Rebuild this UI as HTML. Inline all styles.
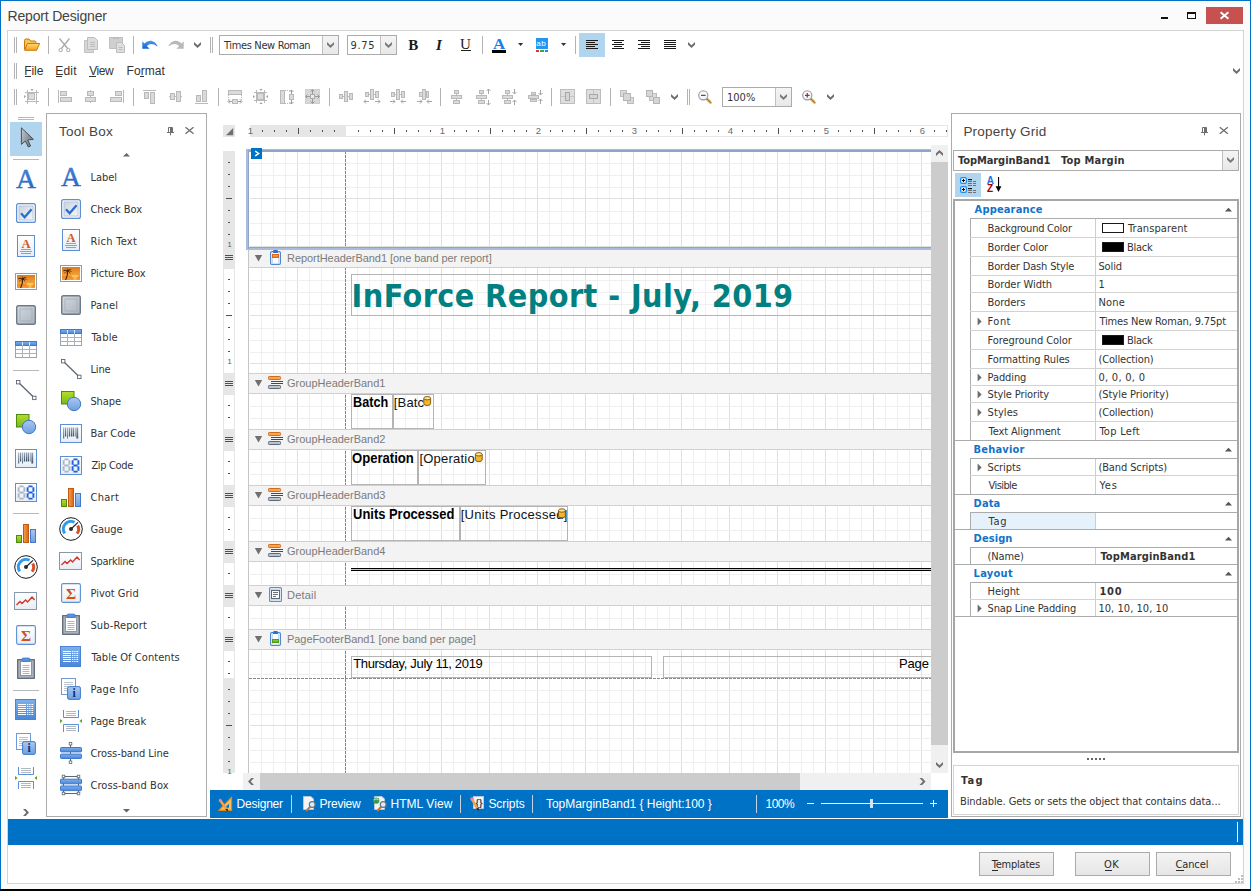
<!DOCTYPE html>
<html lang="en"><head><meta charset="utf-8"><title>Report Designer</title>
<style>
html,body{margin:0;padding:0}
body{width:1251px;height:891px;position:relative;overflow:hidden;background:#000;font-family:"Liberation Sans",sans-serif;font-size:12px}
#app div{position:absolute}
#app section{position:absolute;left:0;top:0;width:0;height:0}
.t{position:absolute;white-space:pre;display:block}
#ov{position:absolute;left:0;top:0;pointer-events:none}
u{text-decoration:underline;text-underline-offset:1px}
</style></head>
<body>
<div id="app">
<section class="window-frame" aria-label="Window frame, status bar and dialog buttons">
<div style="left:0px;top:0px;width:1251px;height:889px;background:#fbfbfb;border:1px solid #0072c6;border-bottom:none;box-sizing:border-box;"></div>
<div style="left:1px;top:1px;width:1249px;height:888px;border-left:1px solid #fff;border-top:1px solid #fff;border-right:1px solid #fff;box-sizing:border-box;"></div>
<div style="left:7px;top:30px;width:1237px;height:854px;background:#fff;border:1px solid #d4d4d4;box-sizing:border-box;"></div>
<span id="t0" class="t" style="left:7.5px;top:7px;font-size:14px;line-height:18px;color:#444;font-family:'Liberation Sans',sans-serif;letter-spacing:-0.179px;">Report Designer</span>
<div style="left:1206px;top:7px;width:37px;height:17px;background:#c75050;"></div>
<div style="left:8px;top:819px;width:1235px;height:26px;background:#0072c6;"></div>
<div style="left:1237px;top:822px;width:1px;height:20px;background:#fff;"></div>
<div style="left:979px;top:852px;width:75px;height:24px;background:linear-gradient(#f3f3f3,#e6e6e6);border:1px solid #ababab;box-sizing:border-box;"></div>
<span id="t1" class="t" style="left:991.7px;top:858px;font-size:11px;line-height:14px;color:#2b2b2b;font-family:'DejaVu Sans Condensed','Liberation Sans',sans-serif;letter-spacing:-0.213px;">Templates</span>
<div style="left:991.7px;top:870px;width:6.3px;height:1px;background:#2b2b2b;"></div>
<div style="left:1075px;top:852px;width:75px;height:24px;background:linear-gradient(#f3f3f3,#e6e6e6);border:1px solid #ababab;box-sizing:border-box;"></div>
<span id="t2" class="t" style="left:1104.0px;top:858px;font-size:11px;line-height:14px;color:#2b2b2b;font-family:'DejaVu Sans Condensed','Liberation Sans',sans-serif;letter-spacing:0.400px;">OK</span>
<div style="left:1105px;top:870px;width:7.1px;height:1px;background:#2b2b2b;"></div>
<div style="left:1156px;top:852px;width:75px;height:24px;background:linear-gradient(#f3f3f3,#e6e6e6);border:1px solid #ababab;box-sizing:border-box;"></div>
<span id="t3" class="t" style="left:1175.4px;top:858px;font-size:11px;line-height:14px;color:#2b2b2b;font-family:'DejaVu Sans Condensed','Liberation Sans',sans-serif;letter-spacing:-0.100px;">Cancel</span>
<div style="left:1176.4px;top:870px;width:7.3px;height:1px;background:#2b2b2b;"></div>
</section>
<section class="toolbars" aria-label="Toolbars and main menu">
<div style="left:14px;top:37px;width:1px;height:16px;background:#b4b4b4;"></div>
<div style="left:16px;top:37px;width:1px;height:16px;background:#b4b4b4;"></div>
<div style="left:48px;top:36px;width:1px;height:18px;background:#b4b4b4;"></div>
<div style="left:133px;top:36px;width:1px;height:18px;background:#b4b4b4;"></div>
<div style="left:210px;top:37px;width:1px;height:16px;background:#b4b4b4;"></div>
<div style="left:212px;top:37px;width:1px;height:16px;background:#b4b4b4;"></div>
<div style="left:219px;top:35px;width:120px;height:20px;background:#fff;border:1px solid #ababab;box-sizing:border-box;"></div>
<div style="left:322px;top:36px;width:16px;height:18px;background:linear-gradient(#f4f4f4,#e8e8e8);border-left:1px solid #c0c0c0;box-sizing:border-box;"></div>
<span id="t4" class="t" style="left:224.0px;top:39px;font-size:11px;line-height:14px;color:#333;font-family:'DejaVu Sans Condensed','Liberation Sans',sans-serif;letter-spacing:-0.357px;">Times New Roman</span>
<div style="left:347px;top:35px;width:50px;height:20px;background:#fff;border:1px solid #ababab;box-sizing:border-box;"></div>
<div style="left:380px;top:36px;width:16px;height:18px;background:linear-gradient(#f4f4f4,#e8e8e8);border-left:1px solid #c0c0c0;box-sizing:border-box;"></div>
<span id="t5" class="t" style="left:350.5px;top:39px;font-size:11px;line-height:14px;color:#333;font-family:'DejaVu Sans Condensed','Liberation Sans',sans-serif;letter-spacing:0.667px;">9.75</span>
<span id="t6" class="t" style="left:408.2px;top:35px;font-size:15px;line-height:20px;color:#1a1a1a;font-family:'Liberation Serif',serif;font-weight:bold;">B</span>
<span id="t7" class="t" style="left:436.0px;top:35px;font-size:15px;line-height:20px;color:#1a1a1a;font-family:'Liberation Serif',serif;font-weight:bold;font-style:italic;">I</span>
<span id="t8" class="t" style="left:460.1px;top:34px;font-size:15px;line-height:20px;color:#1a1a1a;font-family:'Liberation Serif',serif;">U</span>
<div style="left:461px;top:50px;width:10px;height:1px;background:#222;"></div>
<div style="left:482px;top:36px;width:1px;height:18px;background:#b4b4b4;"></div>
<div style="left:492px;top:50px;width:14px;height:3px;background:#000;"></div>
<div style="left:536px;top:38px;width:12px;height:11px;background:#2196f3;"></div>
<span id="t9" class="t" style="left:536.2px;top:39px;font-size:8px;line-height:10px;color:#fff;font-family:'Liberation Sans',sans-serif;letter-spacing:0.600px;">ab</span>
<div style="left:536px;top:50px;width:3px;height:2px;background:#e53030;"></div>
<div style="left:540px;top:50px;width:4px;height:2px;background:#43a832;"></div>
<div style="left:545px;top:50px;width:3px;height:2px;background:#1e8af0;"></div>
<div style="left:575px;top:36px;width:1px;height:18px;background:#b4b4b4;"></div>
<div style="left:579px;top:33px;width:26px;height:24px;background:#b2d5ef;"></div>
<div style="left:14px;top:63px;width:1px;height:16px;background:#b4b4b4;"></div>
<div style="left:16px;top:63px;width:1px;height:16px;background:#b4b4b4;"></div>
<span id="t10" class="t" style="left:24.2px;top:63px;font-size:12px;line-height:16px;color:#333;font-family:'Liberation Sans',sans-serif;letter-spacing:-0.067px;">File</span>
<div style="left:25.2px;top:76px;width:5.5px;height:1px;background:#333;"></div>
<span id="t11" class="t" style="left:55.2px;top:63px;font-size:12px;line-height:16px;color:#333;font-family:'Liberation Sans',sans-serif;letter-spacing:0.200px;">Edit</span>
<div style="left:56.2px;top:76px;width:5.4px;height:1px;background:#333;"></div>
<span id="t12" class="t" style="left:89.2px;top:63px;font-size:12px;line-height:16px;color:#333;font-family:'Liberation Sans',sans-serif;letter-spacing:-0.400px;">View</span>
<div style="left:89.2px;top:76px;width:6.7px;height:1px;background:#333;"></div>
<span id="t13" class="t" style="left:126.5px;top:63px;font-size:12px;line-height:16px;color:#333;font-family:'Liberation Sans',sans-serif;letter-spacing:0.080px;">Format</span>
<div style="left:140.2px;top:76px;width:3.6px;height:1px;background:#333;"></div>
<div style="left:14px;top:89px;width:1px;height:16px;background:#b4b4b4;"></div>
<div style="left:16px;top:89px;width:1px;height:16px;background:#b4b4b4;"></div>
<div style="left:48px;top:88px;width:1px;height:18px;background:#b4b4b4;"></div>
<div style="left:133px;top:88px;width:1px;height:18px;background:#b4b4b4;"></div>
<div style="left:218px;top:88px;width:1px;height:18px;background:#b4b4b4;"></div>
<div style="left:329px;top:88px;width:1px;height:18px;background:#b4b4b4;"></div>
<div style="left:440px;top:88px;width:1px;height:18px;background:#b4b4b4;"></div>
<div style="left:551px;top:88px;width:1px;height:18px;background:#b4b4b4;"></div>
<div style="left:610px;top:88px;width:1px;height:18px;background:#b4b4b4;"></div>
<div style="left:687px;top:89px;width:1px;height:16px;background:#b4b4b4;"></div>
<div style="left:689px;top:89px;width:1px;height:16px;background:#b4b4b4;"></div>
<div style="left:722px;top:87px;width:70px;height:20px;background:#fff;border:1px solid #ababab;box-sizing:border-box;"></div>
<div style="left:775px;top:88px;width:16px;height:18px;background:linear-gradient(#f4f4f4,#e8e8e8);border-left:1px solid #c0c0c0;box-sizing:border-box;"></div>
<span id="t14" class="t" style="left:727.0px;top:91px;font-size:11px;line-height:14px;color:#333;font-family:'DejaVu Sans Condensed','Liberation Sans',sans-serif;letter-spacing:0.000px;">100%</span>
</section>
<section class="toolbox" aria-label="Tool Box">
<div style="left:18px;top:117px;width:16px;height:1px;background:#b9b9b9;"></div>
<div style="left:18px;top:119px;width:16px;height:1px;background:#b9b9b9;"></div>
<div style="left:10px;top:122px;width:32px;height:34px;background:#b2d5ef;"></div>
<div style="left:13px;top:159px;width:26px;height:1px;background:#b9b9b9;"></div>
<div style="left:13px;top:370px;width:26px;height:1px;background:#b9b9b9;"></div>
<div style="left:13px;top:513px;width:26px;height:1px;background:#b9b9b9;"></div>
<div style="left:13px;top:690px;width:26px;height:1px;background:#b9b9b9;"></div>
<div style="left:46px;top:113px;width:161px;height:704px;background:#fff;border:1px solid #ababab;box-sizing:border-box;"></div>
<span id="t15" class="t" style="left:59.0px;top:123px;font-size:13.5px;line-height:18px;color:#444;font-family:'Liberation Sans',sans-serif;letter-spacing:0.286px;">Tool Box</span>
<span id="t16" class="t" style="left:90.4px;top:171px;font-size:11px;line-height:14px;color:#333;font-family:'DejaVu Sans Condensed','Liberation Sans',sans-serif;letter-spacing:0.000px;">Label</span>
<span id="t17" class="t" style="left:90.4px;top:203px;font-size:11px;line-height:14px;color:#333;font-family:'DejaVu Sans Condensed','Liberation Sans',sans-serif;letter-spacing:-0.038px;">Check Box</span>
<span id="t18" class="t" style="left:90.4px;top:235px;font-size:11px;line-height:14px;color:#333;font-family:'DejaVu Sans Condensed','Liberation Sans',sans-serif;letter-spacing:0.275px;">Rich Text</span>
<span id="t19" class="t" style="left:90.4px;top:267px;font-size:11px;line-height:14px;color:#333;font-family:'DejaVu Sans Condensed','Liberation Sans',sans-serif;letter-spacing:-0.030px;">Picture Box</span>
<span id="t20" class="t" style="left:90.4px;top:299px;font-size:11px;line-height:14px;color:#333;font-family:'DejaVu Sans Condensed','Liberation Sans',sans-serif;letter-spacing:0.225px;">Panel</span>
<span id="t21" class="t" style="left:91.4px;top:331px;font-size:11px;line-height:14px;color:#333;font-family:'DejaVu Sans Condensed','Liberation Sans',sans-serif;letter-spacing:0.225px;">Table</span>
<span id="t22" class="t" style="left:90.4px;top:363px;font-size:11px;line-height:14px;color:#333;font-family:'DejaVu Sans Condensed','Liberation Sans',sans-serif;letter-spacing:-0.133px;">Line</span>
<span id="t23" class="t" style="left:90.4px;top:395px;font-size:11px;line-height:14px;color:#333;font-family:'DejaVu Sans Condensed','Liberation Sans',sans-serif;letter-spacing:-0.050px;">Shape</span>
<span id="t24" class="t" style="left:90.4px;top:427px;font-size:11px;line-height:14px;color:#333;font-family:'DejaVu Sans Condensed','Liberation Sans',sans-serif;letter-spacing:-0.029px;">Bar Code</span>
<span id="t25" class="t" style="left:91.4px;top:459px;font-size:11px;line-height:14px;color:#333;font-family:'DejaVu Sans Condensed','Liberation Sans',sans-serif;letter-spacing:-0.343px;">Zip Code</span>
<span id="t26" class="t" style="left:90.4px;top:491px;font-size:11px;line-height:14px;color:#333;font-family:'DejaVu Sans Condensed','Liberation Sans',sans-serif;letter-spacing:0.325px;">Chart</span>
<span id="t27" class="t" style="left:90.4px;top:523px;font-size:11px;line-height:14px;color:#333;font-family:'DejaVu Sans Condensed','Liberation Sans',sans-serif;letter-spacing:-0.025px;">Gauge</span>
<span id="t28" class="t" style="left:90.4px;top:555px;font-size:11px;line-height:14px;color:#333;font-family:'DejaVu Sans Condensed','Liberation Sans',sans-serif;letter-spacing:-0.288px;">Sparkline</span>
<span id="t29" class="t" style="left:90.4px;top:587px;font-size:11px;line-height:14px;color:#333;font-family:'DejaVu Sans Condensed','Liberation Sans',sans-serif;letter-spacing:0.011px;">Pivot Grid</span>
<span id="t30" class="t" style="left:90.4px;top:619px;font-size:11px;line-height:14px;color:#333;font-family:'DejaVu Sans Condensed','Liberation Sans',sans-serif;letter-spacing:0.144px;">Sub-Report</span>
<span id="t31" class="t" style="left:91.4px;top:651px;font-size:11px;line-height:14px;color:#333;font-family:'DejaVu Sans Condensed','Liberation Sans',sans-serif;letter-spacing:0.056px;">Table Of Contents</span>
<span id="t32" class="t" style="left:90.4px;top:683px;font-size:11px;line-height:14px;color:#333;font-family:'DejaVu Sans Condensed','Liberation Sans',sans-serif;letter-spacing:0.325px;">Page Info</span>
<span id="t33" class="t" style="left:90.4px;top:715px;font-size:11px;line-height:14px;color:#333;font-family:'DejaVu Sans Condensed','Liberation Sans',sans-serif;letter-spacing:0.022px;">Page Break</span>
<span id="t34" class="t" style="left:90.4px;top:747px;font-size:11px;line-height:14px;color:#333;font-family:'DejaVu Sans Condensed','Liberation Sans',sans-serif;letter-spacing:-0.071px;">Cross-band Line</span>
<span id="t35" class="t" style="left:90.4px;top:779px;font-size:11px;line-height:14px;color:#333;font-family:'DejaVu Sans Condensed','Liberation Sans',sans-serif;letter-spacing:0.085px;">Cross-band Box</span>
</section>
<section class="designer" aria-label="Report design surface">
<div style="left:223px;top:125px;width:12px;height:12px;background:#e6e6e6;"></div>
<div style="left:250px;top:125px;width:698px;height:12px;background:#fff;border:1px solid #e6e6e6;box-sizing:border-box;"></div>
<div style="left:250px;top:125px;width:96px;height:12px;background:#e6e6e6;"></div>
<div style="left:240px;top:125px;width:10px;height:12px;background:#fff;"></div>
<div style="left:223px;top:151px;width:12px;height:622px;background:#e6e6e6;"></div>
<div style="left:224px;top:269px;width:10px;height:104px;background:#fff;"></div>
<div style="left:224px;top:395px;width:10px;height:34px;background:#fff;"></div>
<div style="left:224px;top:451px;width:10px;height:34px;background:#fff;"></div>
<div style="left:224px;top:507px;width:10px;height:34px;background:#fff;"></div>
<div style="left:224px;top:563px;width:10px;height:22px;background:#fff;"></div>
<div style="left:224px;top:607px;width:10px;height:22px;background:#fff;"></div>
<div style="left:224px;top:651px;width:10px;height:27px;background:#fff;"></div>
<div style="left:248px;top:151px;width:1px;height:622px;background:#c6c6c6;"></div>
<div style="left:249px;top:151px;width:1px;height:622px;background:#fff;"></div>
<div style="left:250px;top:151px;width:681px;height:99px;background-color:#fff;background-image:linear-gradient(to right,transparent 47px,#e0e0e0 47px,#e0e0e0 48px,transparent 48px),linear-gradient(to right,transparent 11px,#efefef 11px,#efefef 12px,transparent 12px,transparent 23px,#efefef 23px,#efefef 24px,transparent 24px,transparent 35px,#efefef 35px,#efefef 36px,transparent 36px);background-size:48px 48px;"></div>
<div style="left:250px;top:152px;width:681px;height:98px;background-image:linear-gradient(to bottom,transparent 46px,#e0e0e0 46px,#e0e0e0 47px,transparent 47px),linear-gradient(to bottom,transparent 11px,#efefef 11px,#efefef 12px,transparent 12px,transparent 23px,#efefef 23px,#efefef 24px,transparent 24px,transparent 35px,#efefef 35px,#efefef 36px,transparent 36px);background-size:48px 48px;"></div>
<div style="left:250px;top:268px;width:681px;height:105px;background-color:#fff;background-image:linear-gradient(to right,transparent 47px,#e0e0e0 47px,#e0e0e0 48px,transparent 48px),linear-gradient(to right,transparent 11px,#efefef 11px,#efefef 12px,transparent 12px,transparent 23px,#efefef 23px,#efefef 24px,transparent 24px,transparent 35px,#efefef 35px,#efefef 36px,transparent 36px);background-size:48px 48px;"></div>
<div style="left:250px;top:269px;width:681px;height:104px;background-image:linear-gradient(to bottom,transparent 46px,#e0e0e0 46px,#e0e0e0 47px,transparent 47px),linear-gradient(to bottom,transparent 11px,#efefef 11px,#efefef 12px,transparent 12px,transparent 23px,#efefef 23px,#efefef 24px,transparent 24px,transparent 35px,#efefef 35px,#efefef 36px,transparent 36px);background-size:48px 48px;"></div>
<div style="left:250px;top:394px;width:681px;height:35px;background-color:#fff;background-image:linear-gradient(to right,transparent 47px,#e0e0e0 47px,#e0e0e0 48px,transparent 48px),linear-gradient(to right,transparent 11px,#efefef 11px,#efefef 12px,transparent 12px,transparent 23px,#efefef 23px,#efefef 24px,transparent 24px,transparent 35px,#efefef 35px,#efefef 36px,transparent 36px);background-size:48px 48px;"></div>
<div style="left:250px;top:395px;width:681px;height:34px;background-image:linear-gradient(to bottom,transparent 46px,#e0e0e0 46px,#e0e0e0 47px,transparent 47px),linear-gradient(to bottom,transparent 11px,#efefef 11px,#efefef 12px,transparent 12px,transparent 23px,#efefef 23px,#efefef 24px,transparent 24px,transparent 35px,#efefef 35px,#efefef 36px,transparent 36px);background-size:48px 48px;"></div>
<div style="left:250px;top:450px;width:681px;height:35px;background-color:#fff;background-image:linear-gradient(to right,transparent 47px,#e0e0e0 47px,#e0e0e0 48px,transparent 48px),linear-gradient(to right,transparent 11px,#efefef 11px,#efefef 12px,transparent 12px,transparent 23px,#efefef 23px,#efefef 24px,transparent 24px,transparent 35px,#efefef 35px,#efefef 36px,transparent 36px);background-size:48px 48px;"></div>
<div style="left:250px;top:451px;width:681px;height:34px;background-image:linear-gradient(to bottom,transparent 46px,#e0e0e0 46px,#e0e0e0 47px,transparent 47px),linear-gradient(to bottom,transparent 11px,#efefef 11px,#efefef 12px,transparent 12px,transparent 23px,#efefef 23px,#efefef 24px,transparent 24px,transparent 35px,#efefef 35px,#efefef 36px,transparent 36px);background-size:48px 48px;"></div>
<div style="left:250px;top:506px;width:681px;height:35px;background-color:#fff;background-image:linear-gradient(to right,transparent 47px,#e0e0e0 47px,#e0e0e0 48px,transparent 48px),linear-gradient(to right,transparent 11px,#efefef 11px,#efefef 12px,transparent 12px,transparent 23px,#efefef 23px,#efefef 24px,transparent 24px,transparent 35px,#efefef 35px,#efefef 36px,transparent 36px);background-size:48px 48px;"></div>
<div style="left:250px;top:507px;width:681px;height:34px;background-image:linear-gradient(to bottom,transparent 46px,#e0e0e0 46px,#e0e0e0 47px,transparent 47px),linear-gradient(to bottom,transparent 11px,#efefef 11px,#efefef 12px,transparent 12px,transparent 23px,#efefef 23px,#efefef 24px,transparent 24px,transparent 35px,#efefef 35px,#efefef 36px,transparent 36px);background-size:48px 48px;"></div>
<div style="left:250px;top:562px;width:681px;height:23px;background-color:#fff;background-image:linear-gradient(to right,transparent 47px,#e0e0e0 47px,#e0e0e0 48px,transparent 48px),linear-gradient(to right,transparent 11px,#efefef 11px,#efefef 12px,transparent 12px,transparent 23px,#efefef 23px,#efefef 24px,transparent 24px,transparent 35px,#efefef 35px,#efefef 36px,transparent 36px);background-size:48px 48px;"></div>
<div style="left:250px;top:563px;width:681px;height:22px;background-image:linear-gradient(to bottom,transparent 46px,#e0e0e0 46px,#e0e0e0 47px,transparent 47px),linear-gradient(to bottom,transparent 11px,#efefef 11px,#efefef 12px,transparent 12px,transparent 23px,#efefef 23px,#efefef 24px,transparent 24px,transparent 35px,#efefef 35px,#efefef 36px,transparent 36px);background-size:48px 48px;"></div>
<div style="left:250px;top:606px;width:681px;height:23px;background-color:#fff;background-image:linear-gradient(to right,transparent 47px,#e0e0e0 47px,#e0e0e0 48px,transparent 48px),linear-gradient(to right,transparent 11px,#efefef 11px,#efefef 12px,transparent 12px,transparent 23px,#efefef 23px,#efefef 24px,transparent 24px,transparent 35px,#efefef 35px,#efefef 36px,transparent 36px);background-size:48px 48px;"></div>
<div style="left:250px;top:607px;width:681px;height:22px;background-image:linear-gradient(to bottom,transparent 46px,#e0e0e0 46px,#e0e0e0 47px,transparent 47px),linear-gradient(to bottom,transparent 11px,#efefef 11px,#efefef 12px,transparent 12px,transparent 23px,#efefef 23px,#efefef 24px,transparent 24px,transparent 35px,#efefef 35px,#efefef 36px,transparent 36px);background-size:48px 48px;"></div>
<div style="left:250px;top:650px;width:681px;height:28px;background-color:#fff;background-image:linear-gradient(to right,transparent 47px,#e0e0e0 47px,#e0e0e0 48px,transparent 48px),linear-gradient(to right,transparent 11px,#efefef 11px,#efefef 12px,transparent 12px,transparent 23px,#efefef 23px,#efefef 24px,transparent 24px,transparent 35px,#efefef 35px,#efefef 36px,transparent 36px);background-size:48px 48px;"></div>
<div style="left:250px;top:651px;width:681px;height:27px;background-image:linear-gradient(to bottom,transparent 46px,#e0e0e0 46px,#e0e0e0 47px,transparent 47px),linear-gradient(to bottom,transparent 11px,#efefef 11px,#efefef 12px,transparent 12px,transparent 23px,#efefef 23px,#efefef 24px,transparent 24px,transparent 35px,#efefef 35px,#efefef 36px,transparent 36px);background-size:48px 48px;"></div>
<div style="left:250px;top:678px;width:681px;height:95px;background-color:#fff;background-image:linear-gradient(to right,transparent 47px,#e0e0e0 47px,#e0e0e0 48px,transparent 48px),linear-gradient(to right,transparent 11px,#efefef 11px,#efefef 12px,transparent 12px,transparent 23px,#efefef 23px,#efefef 24px,transparent 24px,transparent 35px,#efefef 35px,#efefef 36px,transparent 36px);background-size:48px 48px;"></div>
<div style="left:250px;top:679px;width:681px;height:94px;background-image:linear-gradient(to bottom,transparent 46px,#e0e0e0 46px,#e0e0e0 47px,transparent 47px),linear-gradient(to bottom,transparent 11px,#efefef 11px,#efefef 12px,transparent 12px,transparent 23px,#efefef 23px,#efefef 24px,transparent 24px,transparent 35px,#efefef 35px,#efefef 36px,transparent 36px);background-size:48px 48px;"></div>
<div style="left:345px;top:151px;width:1px;height:622px;background:repeating-linear-gradient(to bottom,#858585 0,#858585 3px,transparent 3px,transparent 4px);"></div>
<div style="left:249px;top:678px;width:682px;height:1px;background:repeating-linear-gradient(to right,#8a8a8a 0,#8a8a8a 3px,#fff 3px,#fff 4px);"></div>
<div style="left:249px;top:250px;width:682px;height:18px;background:#f3f3f3;border-bottom:1px solid #d0d0d0;box-sizing:border-box;"></div>
<span id="t36" class="t" style="left:287.0px;top:251px;font-size:11px;line-height:14px;color:#7b7b7b;font-family:'Liberation Sans',sans-serif;letter-spacing:-0.053px;">ReportHeaderBand1 [one band per report]</span>
<div style="left:249px;top:373px;width:682px;height:21px;background:#f3f3f3;border-top:1px solid #d0d0d0;border-bottom:1px solid #d0d0d0;box-sizing:border-box;"></div>
<span id="t37" class="t" style="left:287.0px;top:376px;font-size:11px;line-height:14px;color:#7b7b7b;font-family:'Liberation Sans',sans-serif;letter-spacing:0.000px;">GroupHeaderBand1</span>
<div style="left:249px;top:429px;width:682px;height:21px;background:#f3f3f3;border-top:1px solid #d0d0d0;border-bottom:1px solid #d0d0d0;box-sizing:border-box;"></div>
<span id="t38" class="t" style="left:287.0px;top:432px;font-size:11px;line-height:14px;color:#7b7b7b;font-family:'Liberation Sans',sans-serif;letter-spacing:0.000px;">GroupHeaderBand2</span>
<div style="left:249px;top:485px;width:682px;height:21px;background:#f3f3f3;border-top:1px solid #d0d0d0;border-bottom:1px solid #d0d0d0;box-sizing:border-box;"></div>
<span id="t39" class="t" style="left:287.0px;top:488px;font-size:11px;line-height:14px;color:#7b7b7b;font-family:'Liberation Sans',sans-serif;letter-spacing:0.000px;">GroupHeaderBand3</span>
<div style="left:249px;top:541px;width:682px;height:21px;background:#f3f3f3;border-top:1px solid #d0d0d0;border-bottom:1px solid #d0d0d0;box-sizing:border-box;"></div>
<span id="t40" class="t" style="left:287.0px;top:544px;font-size:11px;line-height:14px;color:#7b7b7b;font-family:'Liberation Sans',sans-serif;letter-spacing:0.000px;">GroupHeaderBand4</span>
<div style="left:249px;top:585px;width:682px;height:21px;background:#f3f3f3;border-top:1px solid #d0d0d0;border-bottom:1px solid #d0d0d0;box-sizing:border-box;"></div>
<span id="t41" class="t" style="left:287.0px;top:588px;font-size:11px;line-height:14px;color:#7b7b7b;font-family:'Liberation Sans',sans-serif;letter-spacing:0.200px;">Detail</span>
<div style="left:249px;top:629px;width:682px;height:21px;background:#f3f3f3;border-top:1px solid #d0d0d0;border-bottom:1px solid #d0d0d0;box-sizing:border-box;"></div>
<span id="t42" class="t" style="left:287.0px;top:632px;font-size:11px;line-height:14px;color:#7b7b7b;font-family:'Liberation Sans',sans-serif;letter-spacing:-0.059px;">PageFooterBand1 [one band per page]</span>
<div style="left:246px;top:149px;width:685px;height:1px;background:#a9bcd9;"></div>
<div style="left:246px;top:150px;width:685px;height:2px;background:#8fa5c7;"></div>
<div style="left:246px;top:247px;width:685px;height:1px;background:#8fa5c7;"></div>
<div style="left:246px;top:248px;width:685px;height:2px;background:#a9bcd9;"></div>
<div style="left:246px;top:149px;width:2px;height:101px;background:#a9bcd9;"></div>
<div style="left:248px;top:150px;width:1px;height:99px;background:#8fa5c7;"></div>
<div style="left:251px;top:148px;width:11px;height:11px;background:#0072c6;"></div>
<div style="left:351px;top:274px;width:580px;height:42px;border:1px solid #b4b4b4;box-sizing:border-box;border-right:none;"></div>
<span id="t43" class="t" style="left:351.6px;top:275px;font-size:32px;line-height:42px;color:#008080;font-family:'DejaVu Sans Condensed','Liberation Sans',sans-serif;font-weight:bold;letter-spacing:0.419px;">InForce Report - July, 2019</span>
<div style="left:351px;top:394px;width:42px;height:35px;border:1px solid #b4b4b4;box-sizing:border-box;"></div>
<div style="left:393px;top:394px;width:41px;height:35px;border:1px solid #b4b4b4;box-sizing:border-box;"></div>
<span id="t44" class="t" style="left:352.8px;top:393px;font-size:14px;line-height:18px;color:#000;font-family:'Liberation Sans',sans-serif;font-weight:bold;transform:scaleX(0.9027);transform-origin:1.0px 0;">Batch</span>
<span id="t45" class="t" style="left:393.8px;top:394px;font-size:13px;line-height:17px;color:#111;font-family:'Liberation Sans',sans-serif;letter-spacing:0.175px;">[Batc</span>
<div style="left:351px;top:450px;width:67px;height:35px;border:1px solid #b4b4b4;box-sizing:border-box;"></div>
<div style="left:418px;top:450px;width:68px;height:35px;border:1px solid #b4b4b4;box-sizing:border-box;"></div>
<span id="t46" class="t" style="left:352.4px;top:449px;font-size:14px;line-height:18px;color:#000;font-family:'Liberation Sans',sans-serif;font-weight:bold;transform:scaleX(0.9344);transform-origin:1.0px 0;">Operation</span>
<span id="t47" class="t" style="left:419.4px;top:450px;font-size:13px;line-height:17px;color:#111;font-family:'Liberation Sans',sans-serif;letter-spacing:0.225px;">[Operatio</span>
<div style="left:351px;top:506px;width:109px;height:35px;border:1px solid #b4b4b4;box-sizing:border-box;"></div>
<div style="left:460px;top:506px;width:108px;height:35px;border:1px solid #b4b4b4;box-sizing:border-box;"></div>
<span id="t48" class="t" style="left:352.7px;top:505px;font-size:14px;line-height:18px;color:#000;font-family:'Liberation Sans',sans-serif;font-weight:bold;transform:scaleX(0.9231);transform-origin:1.0px 0;">Units Processed</span>
<span id="t49" class="t" style="left:460.7px;top:506px;font-size:13px;line-height:17px;color:#111;font-family:'Liberation Sans',sans-serif;letter-spacing:0.300px;">[Units Processed]</span>
<div style="left:351px;top:568px;width:580px;height:1px;background:#000;"></div>
<div style="left:351px;top:569px;width:580px;height:1px;background:#c8c8c8;"></div>
<div style="left:351px;top:570px;width:580px;height:1px;background:#000;"></div>
<div style="left:351px;top:656px;width:301px;height:22px;border:1px solid #b4b4b4;box-sizing:border-box;"></div>
<div style="left:663px;top:656px;width:268px;height:22px;border:1px solid #b4b4b4;box-sizing:border-box;border-right:none;"></div>
<span id="t50" class="t" style="left:353.2px;top:655px;font-size:13px;line-height:17px;color:#000;font-family:'Liberation Sans',sans-serif;letter-spacing:-0.327px;">Thursday, July 11, 2019</span>
<span id="t51" class="t" style="left:899.0px;top:655px;font-size:13px;line-height:17px;color:#000;font-family:'Liberation Sans',sans-serif;letter-spacing:-0.167px;">Page</span>
<div style="left:931px;top:145px;width:17px;height:628px;background:#f0f0f0;"></div>
<div style="left:931px;top:162px;width:17px;height:583px;background:#cccccc;"></div>
<div style="left:243px;top:773px;width:688px;height:17px;background:#f0f0f0;"></div>
<div style="left:260px;top:773px;width:540px;height:17px;background:#cccccc;"></div>
<div style="left:210px;top:790px;width:738px;height:28px;background:#0072c6;"></div>
<div style="left:210px;top:818px;width:738px;height:1px;background:#fff;"></div>
<span id="t52" class="t" style="left:236.6px;top:796px;font-size:12px;line-height:16px;color:#fff;font-family:'Liberation Sans',sans-serif;letter-spacing:-0.229px;">Designer</span>
<div style="left:291px;top:795px;width:1px;height:18px;background:#c6d2de;"></div>
<span id="t53" class="t" style="left:319.6px;top:796px;font-size:12px;line-height:16px;color:#fff;font-family:'Liberation Sans',sans-serif;letter-spacing:-0.267px;">Preview</span>
<span id="t54" class="t" style="left:390.4px;top:796px;font-size:12px;line-height:16px;color:#fff;font-family:'Liberation Sans',sans-serif;letter-spacing:0.075px;">HTML View</span>
<div style="left:460px;top:795px;width:1px;height:18px;background:#c6d2de;"></div>
<span id="t55" class="t" style="left:488.4px;top:796px;font-size:12px;line-height:16px;color:#fff;font-family:'Liberation Sans',sans-serif;letter-spacing:-0.067px;">Scripts</span>
<div style="left:532px;top:795px;width:1px;height:18px;background:#c6d2de;"></div>
<span id="t56" class="t" style="left:546.0px;top:796px;font-size:12px;line-height:16px;color:#fff;font-family:'Liberation Sans',sans-serif;letter-spacing:-0.036px;">TopMarginBand1 { Height:100 }</span>
<div style="left:756px;top:795px;width:1px;height:18px;background:#c6d2de;"></div>
<span id="t57" class="t" style="left:765.5px;top:796px;font-size:12px;line-height:16px;color:#fff;font-family:'Liberation Sans',sans-serif;letter-spacing:-0.500px;">100%</span>
<div style="left:807px;top:803px;width:7px;height:1px;background:#fff;"></div>
<div style="left:821px;top:803px;width:102px;height:1px;background:#fff;"></div>
<div style="left:870px;top:799px;width:3px;height:9px;background:#cfe3f5;"></div>
<div style="left:930px;top:803px;width:7px;height:1px;background:#fff;"></div>
<div style="left:933px;top:800px;width:1px;height:7px;background:#fff;"></div>
</section>
<section class="property-grid" aria-label="Property Grid">
<div style="left:951px;top:113px;width:290px;height:704px;background:#fff;border:1px solid #ababab;box-sizing:border-box;"></div>
<span id="t58" class="t" style="left:963.4px;top:123px;font-size:13.5px;line-height:18px;color:#444;font-family:'Liberation Sans',sans-serif;letter-spacing:0.217px;">Property Grid</span>
<div style="left:953px;top:150px;width:286px;height:21px;background:#fff;border:1px solid #ababab;box-sizing:border-box;"></div>
<div style="left:1222px;top:151px;width:16px;height:19px;background:linear-gradient(#f4f4f4,#e8e8e8);border-left:1px solid #c0c0c0;box-sizing:border-box;"></div>
<span id="t59" class="t" style="left:958.0px;top:154px;font-size:11px;line-height:14px;color:#333;font-family:'DejaVu Sans Condensed','Liberation Sans',sans-serif;font-weight:bold;letter-spacing:-0.077px;">TopMarginBand1</span>
<span id="t60" class="t" style="left:1061.0px;top:154px;font-size:11px;line-height:14px;color:#333;font-family:'DejaVu Sans Condensed','Liberation Sans',sans-serif;font-weight:bold;letter-spacing:0.222px;">Top Margin</span>
<div style="left:955px;top:173px;width:26px;height:24px;background:#b2d5ef;"></div>
<div style="left:953px;top:199px;width:286px;height:554px;background:#fff;border:2px solid #a6a6a6;box-sizing:border-box;"></div>
<div style="left:970px;top:218px;width:267px;height:1px;background:#ababab;"></div>
<span id="t61" class="t" style="left:974.6px;top:203px;font-size:11px;line-height:14px;color:#1273c8;font-family:'DejaVu Sans Condensed','Liberation Sans',sans-serif;font-weight:bold;letter-spacing:0.156px;">Appearance</span>
<div style="left:970px;top:237px;width:267px;height:1px;background:#d2d2d2;"></div>
<div style="left:970px;top:219px;width:1px;height:18px;background:#ababab;"></div>
<div style="left:1095px;top:219px;width:1px;height:18px;background:#cdcdcd;"></div>
<span id="t62" class="t" style="left:987.6px;top:222px;font-size:11px;line-height:14px;color:#333;font-family:'DejaVu Sans Condensed','Liberation Sans',sans-serif;letter-spacing:-0.240px;">Background Color</span>
<div style="left:1102px;top:223px;width:22px;height:10px;background:#fff;border:1px solid #1a1a1a;box-sizing:border-box;"></div>
<span id="t63" class="t" style="left:1128.0px;top:222px;font-size:11px;line-height:14px;color:#333;font-family:'DejaVu Sans Condensed','Liberation Sans',sans-serif;letter-spacing:0.100px;">Transparent</span>
<div style="left:970px;top:256px;width:267px;height:1px;background:#d2d2d2;"></div>
<div style="left:970px;top:238px;width:1px;height:18px;background:#ababab;"></div>
<div style="left:1095px;top:238px;width:1px;height:18px;background:#cdcdcd;"></div>
<span id="t64" class="t" style="left:987.6px;top:241px;font-size:11px;line-height:14px;color:#333;font-family:'DejaVu Sans Condensed','Liberation Sans',sans-serif;letter-spacing:-0.145px;">Border Color</span>
<div style="left:1102px;top:242px;width:22px;height:10px;background:#000;border:1px solid #1a1a1a;box-sizing:border-box;"></div>
<span id="t65" class="t" style="left:1127.0px;top:241px;font-size:11px;line-height:14px;color:#333;font-family:'DejaVu Sans Condensed','Liberation Sans',sans-serif;letter-spacing:-0.250px;">Black</span>
<div style="left:970px;top:275px;width:267px;height:1px;background:#d2d2d2;"></div>
<div style="left:970px;top:257px;width:1px;height:18px;background:#ababab;"></div>
<div style="left:1095px;top:257px;width:1px;height:18px;background:#cdcdcd;"></div>
<span id="t66" class="t" style="left:987.6px;top:260px;font-size:11px;line-height:14px;color:#333;font-family:'DejaVu Sans Condensed','Liberation Sans',sans-serif;letter-spacing:-0.163px;">Border Dash Style</span>
<span id="t67" class="t" style="left:1098.4px;top:260px;font-size:11px;line-height:14px;color:#333;font-family:'DejaVu Sans Condensed','Liberation Sans',sans-serif;letter-spacing:-0.100px;">Solid</span>
<div style="left:970px;top:292px;width:267px;height:1px;background:#d2d2d2;"></div>
<div style="left:970px;top:276px;width:1px;height:16px;background:#ababab;"></div>
<div style="left:1095px;top:276px;width:1px;height:16px;background:#cdcdcd;"></div>
<span id="t68" class="t" style="left:987.6px;top:278px;font-size:11px;line-height:14px;color:#333;font-family:'DejaVu Sans Condensed','Liberation Sans',sans-serif;letter-spacing:-0.055px;">Border Width</span>
<span id="t69" class="t" style="left:1098.4px;top:278px;font-size:11px;line-height:14px;color:#333;font-family:'DejaVu Sans Condensed','Liberation Sans',sans-serif;">1</span>
<div style="left:970px;top:311px;width:267px;height:1px;background:#d2d2d2;"></div>
<div style="left:970px;top:293px;width:1px;height:18px;background:#ababab;"></div>
<div style="left:1095px;top:293px;width:1px;height:18px;background:#cdcdcd;"></div>
<span id="t70" class="t" style="left:987.6px;top:296px;font-size:11px;line-height:14px;color:#333;font-family:'DejaVu Sans Condensed','Liberation Sans',sans-serif;letter-spacing:-0.100px;">Borders</span>
<span id="t71" class="t" style="left:1098.4px;top:296px;font-size:11px;line-height:14px;color:#333;font-family:'DejaVu Sans Condensed','Liberation Sans',sans-serif;letter-spacing:0.200px;">None</span>
<div style="left:970px;top:330px;width:267px;height:1px;background:#d2d2d2;"></div>
<div style="left:970px;top:312px;width:1px;height:18px;background:#ababab;"></div>
<div style="left:1095px;top:312px;width:1px;height:18px;background:#cdcdcd;"></div>
<span id="t72" class="t" style="left:987.6px;top:315px;font-size:11px;line-height:14px;color:#333;font-family:'DejaVu Sans Condensed','Liberation Sans',sans-serif;letter-spacing:0.467px;">Font</span>
<span id="t73" class="t" style="left:1099.4px;top:315px;font-size:11px;line-height:14px;color:#333;font-family:'DejaVu Sans Condensed','Liberation Sans',sans-serif;letter-spacing:-0.155px;">Times New Roman, 9.75pt</span>
<div style="left:970px;top:349px;width:267px;height:1px;background:#d2d2d2;"></div>
<div style="left:970px;top:331px;width:1px;height:18px;background:#ababab;"></div>
<div style="left:1095px;top:331px;width:1px;height:18px;background:#cdcdcd;"></div>
<span id="t74" class="t" style="left:987.6px;top:334px;font-size:11px;line-height:14px;color:#333;font-family:'DejaVu Sans Condensed','Liberation Sans',sans-serif;letter-spacing:-0.073px;">Foreground Color</span>
<div style="left:1102px;top:335px;width:22px;height:10px;background:#000;border:1px solid #1a1a1a;box-sizing:border-box;"></div>
<span id="t75" class="t" style="left:1127.0px;top:334px;font-size:11px;line-height:14px;color:#333;font-family:'DejaVu Sans Condensed','Liberation Sans',sans-serif;letter-spacing:-0.250px;">Black</span>
<div style="left:970px;top:368px;width:267px;height:1px;background:#d2d2d2;"></div>
<div style="left:970px;top:350px;width:1px;height:18px;background:#ababab;"></div>
<div style="left:1095px;top:350px;width:1px;height:18px;background:#cdcdcd;"></div>
<span id="t76" class="t" style="left:987.6px;top:353px;font-size:11px;line-height:14px;color:#333;font-family:'DejaVu Sans Condensed','Liberation Sans',sans-serif;letter-spacing:-0.107px;">Formatting Rules</span>
<span id="t77" class="t" style="left:1098.4px;top:353px;font-size:11px;line-height:14px;color:#333;font-family:'DejaVu Sans Condensed','Liberation Sans',sans-serif;letter-spacing:-0.127px;">(Collection)</span>
<div style="left:970px;top:385px;width:267px;height:1px;background:#d2d2d2;"></div>
<div style="left:970px;top:369px;width:1px;height:16px;background:#ababab;"></div>
<div style="left:1095px;top:369px;width:1px;height:16px;background:#cdcdcd;"></div>
<span id="t78" class="t" style="left:987.6px;top:371px;font-size:11px;line-height:14px;color:#333;font-family:'DejaVu Sans Condensed','Liberation Sans',sans-serif;letter-spacing:-0.100px;">Padding</span>
<span id="t79" class="t" style="left:1098.4px;top:371px;font-size:11px;line-height:14px;color:#333;font-family:'DejaVu Sans Condensed','Liberation Sans',sans-serif;letter-spacing:0.289px;">0, 0, 0, 0</span>
<div style="left:970px;top:402px;width:267px;height:1px;background:#d2d2d2;"></div>
<div style="left:970px;top:386px;width:1px;height:16px;background:#ababab;"></div>
<div style="left:1095px;top:386px;width:1px;height:16px;background:#cdcdcd;"></div>
<span id="t80" class="t" style="left:987.6px;top:388px;font-size:11px;line-height:14px;color:#333;font-family:'DejaVu Sans Condensed','Liberation Sans',sans-serif;letter-spacing:-0.123px;">Style Priority</span>
<span id="t81" class="t" style="left:1098.4px;top:388px;font-size:11px;line-height:14px;color:#333;font-family:'DejaVu Sans Condensed','Liberation Sans',sans-serif;letter-spacing:-0.027px;">(Style Priority)</span>
<div style="left:970px;top:421px;width:267px;height:1px;background:#d2d2d2;"></div>
<div style="left:970px;top:403px;width:1px;height:18px;background:#ababab;"></div>
<div style="left:1095px;top:403px;width:1px;height:18px;background:#cdcdcd;"></div>
<span id="t82" class="t" style="left:987.6px;top:406px;font-size:11px;line-height:14px;color:#333;font-family:'DejaVu Sans Condensed','Liberation Sans',sans-serif;letter-spacing:0.080px;">Styles</span>
<span id="t83" class="t" style="left:1098.4px;top:406px;font-size:11px;line-height:14px;color:#333;font-family:'DejaVu Sans Condensed','Liberation Sans',sans-serif;letter-spacing:-0.127px;">(Collection)</span>
<div style="left:955px;top:440px;width:282px;height:1px;background:#ababab;"></div>
<div style="left:970px;top:422px;width:1px;height:18px;background:#ababab;"></div>
<div style="left:1095px;top:422px;width:1px;height:18px;background:#cdcdcd;"></div>
<span id="t84" class="t" style="left:988.6px;top:425px;font-size:11px;line-height:14px;color:#333;font-family:'DejaVu Sans Condensed','Liberation Sans',sans-serif;letter-spacing:-0.123px;">Text Alignment</span>
<span id="t85" class="t" style="left:1099.4px;top:425px;font-size:11px;line-height:14px;color:#333;font-family:'DejaVu Sans Condensed','Liberation Sans',sans-serif;letter-spacing:0.300px;">Top Left</span>
<div style="left:970px;top:458px;width:267px;height:1px;background:#ababab;"></div>
<span id="t86" class="t" style="left:973.6px;top:443px;font-size:11px;line-height:14px;color:#1273c8;font-family:'DejaVu Sans Condensed','Liberation Sans',sans-serif;font-weight:bold;letter-spacing:0.200px;">Behavior</span>
<div style="left:970px;top:475px;width:267px;height:1px;background:#d2d2d2;"></div>
<div style="left:970px;top:459px;width:1px;height:16px;background:#ababab;"></div>
<div style="left:1095px;top:459px;width:1px;height:16px;background:#cdcdcd;"></div>
<span id="t87" class="t" style="left:987.6px;top:461px;font-size:11px;line-height:14px;color:#333;font-family:'DejaVu Sans Condensed','Liberation Sans',sans-serif;letter-spacing:-0.100px;">Scripts</span>
<span id="t88" class="t" style="left:1098.4px;top:461px;font-size:11px;line-height:14px;color:#333;font-family:'DejaVu Sans Condensed','Liberation Sans',sans-serif;letter-spacing:-0.108px;">(Band Scripts)</span>
<div style="left:955px;top:494px;width:282px;height:1px;background:#ababab;"></div>
<div style="left:970px;top:476px;width:1px;height:18px;background:#ababab;"></div>
<div style="left:1095px;top:476px;width:1px;height:18px;background:#cdcdcd;"></div>
<span id="t89" class="t" style="left:988.6px;top:479px;font-size:11px;line-height:14px;color:#333;font-family:'DejaVu Sans Condensed','Liberation Sans',sans-serif;letter-spacing:-0.600px;">Visible</span>
<span id="t90" class="t" style="left:1099.4px;top:479px;font-size:11px;line-height:14px;color:#333;font-family:'DejaVu Sans Condensed','Liberation Sans',sans-serif;letter-spacing:0.800px;">Yes</span>
<div style="left:970px;top:512px;width:267px;height:1px;background:#ababab;"></div>
<span id="t91" class="t" style="left:973.6px;top:497px;font-size:11px;line-height:14px;color:#1273c8;font-family:'DejaVu Sans Condensed','Liberation Sans',sans-serif;font-weight:bold;letter-spacing:0.133px;">Data</span>
<div style="left:955px;top:529px;width:282px;height:1px;background:#ababab;"></div>
<div style="left:970px;top:513px;width:1px;height:16px;background:#ababab;"></div>
<div style="left:1095px;top:513px;width:1px;height:16px;background:#cdcdcd;"></div>
<div style="left:971px;top:513px;width:124px;height:16px;background:#e5f1fb;"></div>
<span id="t92" class="t" style="left:988.6px;top:515px;font-size:11px;line-height:14px;color:#333;font-family:'DejaVu Sans Condensed','Liberation Sans',sans-serif;letter-spacing:0.700px;">Tag</span>
<div style="left:970px;top:547px;width:267px;height:1px;background:#ababab;"></div>
<span id="t93" class="t" style="left:973.6px;top:532px;font-size:11px;line-height:14px;color:#1273c8;font-family:'DejaVu Sans Condensed','Liberation Sans',sans-serif;font-weight:bold;letter-spacing:0.080px;">Design</span>
<div style="left:955px;top:564px;width:282px;height:1px;background:#ababab;"></div>
<div style="left:970px;top:548px;width:1px;height:16px;background:#ababab;"></div>
<div style="left:1095px;top:548px;width:1px;height:16px;background:#cdcdcd;"></div>
<span id="t94" class="t" style="left:987.6px;top:550px;font-size:11px;line-height:14px;color:#333;font-family:'DejaVu Sans Condensed','Liberation Sans',sans-serif;letter-spacing:-0.120px;">(Name)</span>
<span id="t95" class="t" style="left:1100.4px;top:550px;font-size:11px;line-height:14px;color:#333;font-family:'DejaVu Sans Condensed','Liberation Sans',sans-serif;font-weight:bold;letter-spacing:0.123px;">TopMarginBand1</span>
<div style="left:970px;top:582px;width:267px;height:1px;background:#ababab;"></div>
<span id="t96" class="t" style="left:973.6px;top:567px;font-size:11px;line-height:14px;color:#1273c8;font-family:'DejaVu Sans Condensed','Liberation Sans',sans-serif;font-weight:bold;letter-spacing:0.280px;">Layout</span>
<div style="left:970px;top:599px;width:267px;height:1px;background:#d2d2d2;"></div>
<div style="left:970px;top:583px;width:1px;height:16px;background:#ababab;"></div>
<div style="left:1095px;top:583px;width:1px;height:16px;background:#cdcdcd;"></div>
<span id="t97" class="t" style="left:987.6px;top:585px;font-size:11px;line-height:14px;color:#333;font-family:'DejaVu Sans Condensed','Liberation Sans',sans-serif;letter-spacing:-0.120px;">Height</span>
<span id="t98" class="t" style="left:1099.4px;top:585px;font-size:11px;line-height:14px;color:#333;font-family:'DejaVu Sans Condensed','Liberation Sans',sans-serif;font-weight:bold;letter-spacing:0.750px;">100</span>
<div style="left:955px;top:616px;width:282px;height:1px;background:#ababab;"></div>
<div style="left:970px;top:600px;width:1px;height:16px;background:#ababab;"></div>
<div style="left:1095px;top:600px;width:1px;height:16px;background:#cdcdcd;"></div>
<span id="t99" class="t" style="left:987.6px;top:602px;font-size:11px;line-height:14px;color:#333;font-family:'DejaVu Sans Condensed','Liberation Sans',sans-serif;letter-spacing:-0.163px;">Snap Line Padding</span>
<span id="t100" class="t" style="left:1098.4px;top:602px;font-size:11px;line-height:14px;color:#333;font-family:'DejaVu Sans Condensed','Liberation Sans',sans-serif;letter-spacing:0.046px;">10, 10, 10, 10</span>
<div style="left:953px;top:765px;width:286px;height:50px;background:#fff;border:1px solid #d4d4d4;box-sizing:border-box;"></div>
<span id="t101" class="t" style="left:961.0px;top:774px;font-size:11px;line-height:14px;color:#333;font-family:'DejaVu Sans Condensed','Liberation Sans',sans-serif;font-weight:bold;letter-spacing:1.250px;">Tag</span>
<span id="t102" class="t" style="left:960.0px;top:795px;font-size:11px;line-height:14px;color:#333;font-family:'DejaVu Sans Condensed','Liberation Sans',sans-serif;letter-spacing:-0.085px;">Bindable. Gets or sets the object that contains data...</span>
</section>
<svg id="ov" width="1251" height="891" viewBox="0 0 1251 891" aria-hidden="true">
<path d="M1220.6 12.2 L1228.4 18.8 M1228.4 12.2 L1220.6 18.8" stroke="#fff" stroke-width="1.9" fill="none"/>
<rect x="1187.5" y="13" width="8" height="5.5" fill="none" stroke="#111" stroke-width="1"/><rect x="1187" y="12" width="9" height="2" fill="#111"/>
<rect x="1161" y="17" width="7" height="2" fill="#111"/>
<g fill="#bdbdbd"><rect x="1241" y="875" width="2" height="2"/><rect x="1238" y="878" width="2" height="2"/><rect x="1241" y="878" width="2" height="2"/><rect x="1235" y="881" width="2" height="2"/><rect x="1238" y="881" width="2" height="2"/><rect x="1241" y="881" width="2" height="2"/></g>
<g transform="translate(24,38)"><defs><linearGradient id="fo" x1="0" y1="0" x2="0" y2="1"><stop offset="0" stop-color="#ffd777"/><stop offset="1" stop-color="#f5a21b"/></linearGradient></defs>
<path d="M0.5 11.5 V2.5 Q0.5 1 2 1 H5 L6.5 3 H11 Q12 3 12 4.5 V5.5" fill="#f7c65a" stroke="#c6780b" stroke-width="1"/>
<path d="M0.7 12.3 L3.3 5.5 H15.6 L12.6 12.3 Z" fill="url(#fo)" stroke="#c6780b" stroke-width="1" stroke-linejoin="round"/></g>
<g transform="translate(58,38)"><path d="M1.5 0.5 L10 11 M11.5 0.5 L3 11" stroke="#a9a9a9" stroke-width="1.3" fill="none"/>
<circle cx="2.7" cy="12" r="1.7" fill="#fff" stroke="#a9a9a9" stroke-width="1"/><circle cx="10.3" cy="12" r="1.7" fill="#fff" stroke="#a9a9a9" stroke-width="1"/></g>
<g transform="translate(84,37)"><path d="M0.5 3.5 H9.5 V15.5 H0.5 Z" fill="#d6d6d6" stroke="#c2c2c2"/>
<path d="M3.5 0.5 H10.5 L13.5 3.5 V12.5 H3.5 Z" fill="#dcdcdc" stroke="#bdbdbd"/>
<path d="M6 5.5 H11 M6 7.5 H11 M6 9.5 H11" stroke="#bcbcbc" stroke-width="1"/></g>
<g transform="translate(109,37)"><path d="M0.5 0.5 H13.5 V11.5 H0.5 Z" fill="#cfcfcf" stroke="#c0c0c0"/><rect x="4" y="0" width="6" height="2" fill="#bdbdbd"/>
<path d="M7.5 5.5 H12.5 L15.5 8.5 V15.5 H7.5 Z" fill="#dedede" stroke="#bdbdbd"/>
<path d="M9.5 10.5 H13.5 M9.5 12.5 H13.5" stroke="#bcbcbc" stroke-width="1"/></g>
<g transform="translate(142,39)"><defs><linearGradient id="un" x1="0" y1="0" x2="0" y2="1"><stop offset="0" stop-color="#4a9bf5"/><stop offset="1" stop-color="#1560d4"/></linearGradient></defs>
<path d="M0.3 2.2 L0.3 9.8 L7.6 9.8 L5 7.2 C6.5 4.6 10.5 3.6 15.7 7.6 C13.6 1.6 6.8 -0.6 2.6 4.6 Z" fill="url(#un)"/></g>
<g transform="translate(168,39)"><path d="M15.7 2.2 L15.7 9.8 L8.4 9.8 L11 7.2 C9.5 4.6 5.5 3.6 0.3 7.6 C2.4 1.6 9.2 -0.6 13.4 4.6 Z" fill="#b9b9b9"/></g>
<path d="M194 42 L197.5 45.3 L201 42 V44.7 L197.5 48 L194 44.7 Z" fill="#6e6e6e"/>
<path d="M327.0 42.0 L330.5 45.3 L334.0 42.0 V44.7 L330.5 48.0 L327.0 44.7 Z" fill="#7a7a7a"/>
<path d="M385.0 42.0 L388.5 45.3 L392.0 42.0 V44.7 L388.5 48.0 L385.0 44.7 Z" fill="#7a7a7a"/>
<text x="493" y="48.6" font-family="Liberation Serif,serif" font-weight="bold" font-size="14.2" fill="#1a7fe8" textLength="12.2" lengthAdjust="spacingAndGlyphs">A</text>
<path d="M518 43 H523.2 L520.6 46 Z" fill="#333"/>
<path d="M561 43 H566.2 L563.6 46 Z" fill="#333"/>
<rect x="586" y="40" width="12" height="1" fill="#1a1a1a"/><rect x="586" y="42" width="9" height="1" fill="#1a1a1a"/><rect x="586" y="44" width="12" height="1" fill="#1a1a1a"/><rect x="586" y="46" width="9" height="1" fill="#1a1a1a"/><rect x="586" y="48" width="12" height="1" fill="#1a1a1a"/>
<rect x="612" y="40" width="12" height="1" fill="#1a1a1a"/><rect x="614" y="42" width="8" height="1" fill="#1a1a1a"/><rect x="612" y="44" width="12" height="1" fill="#1a1a1a"/><rect x="614" y="46" width="8" height="1" fill="#1a1a1a"/><rect x="612" y="48" width="12" height="1" fill="#1a1a1a"/>
<rect x="638" y="40" width="12" height="1" fill="#1a1a1a"/><rect x="641" y="42" width="9" height="1" fill="#1a1a1a"/><rect x="638" y="44" width="12" height="1" fill="#1a1a1a"/><rect x="641" y="46" width="9" height="1" fill="#1a1a1a"/><rect x="638" y="48" width="12" height="1" fill="#1a1a1a"/>
<rect x="664" y="40" width="12" height="1" fill="#1a1a1a"/><rect x="664" y="42" width="12" height="1" fill="#1a1a1a"/><rect x="664" y="44" width="12" height="1" fill="#1a1a1a"/><rect x="664" y="46" width="12" height="1" fill="#1a1a1a"/><rect x="664" y="48" width="12" height="1" fill="#1a1a1a"/>
<path d="M688 42 L691.5 45.3 L695 42 V44.7 L691.5 48 L688 44.7 Z" fill="#6e6e6e"/>
<path d="M1233 68 L1236.5 71.3 L1240 68 V70.7 L1236.5 74 L1233 70.7 Z" fill="#6e6e6e"/>
<rect x="25" y="92" width="14" height="1" fill="#b9b9b9"/><rect x="25" y="101" width="14" height="1" fill="#b9b9b9"/><rect x="27" y="90" width="1" height="14" fill="#b9b9b9"/><rect x="36" y="90" width="1" height="14" fill="#b9b9b9"/><rect x="28.5" y="93.5" width="6" height="6" fill="#dcdcdc" stroke="#b9b9b9"/><path d="M30.3 89 h3.4 l-1.7 2z M24 95 v3.2 l2 -1.6z" fill="#a6a6a6"/>
<rect x="58" y="90" width="1" height="13" fill="#b9b9b9"/><rect x="60.5" y="91.5" width="6" height="4" fill="#dadada" stroke="#b9b9b9"/><rect x="60.5" y="97.5" width="11" height="4" fill="#dadada" stroke="#b9b9b9"/>
<rect x="90" y="90" width="1" height="13" fill="#b9b9b9"/><rect x="87.5" y="91.5" width="6" height="4" fill="#dadada" stroke="#b9b9b9"/><rect x="85.5" y="97.5" width="10" height="4" fill="#dadada" stroke="#b9b9b9"/>
<rect x="123" y="90" width="1" height="13" fill="#b9b9b9"/><rect x="115.5" y="91.5" width="6" height="4" fill="#dadada" stroke="#b9b9b9"/><rect x="110.5" y="97.5" width="11" height="4" fill="#dadada" stroke="#b9b9b9"/>
<rect x="143" y="90" width="13" height="1" fill="#b9b9b9"/><rect x="144.5" y="92.5" width="4" height="6" fill="#dadada" stroke="#b9b9b9"/><rect x="150.5" y="92.5" width="4" height="11" fill="#dadada" stroke="#b9b9b9"/>
<rect x="169" y="96" width="13" height="1" fill="#b9b9b9"/><rect x="170.5" y="93.5" width="4" height="6" fill="#dadada" stroke="#b9b9b9"/><rect x="176.5" y="91.5" width="4" height="10" fill="#dadada" stroke="#b9b9b9"/>
<rect x="195" y="103" width="13" height="1" fill="#b9b9b9"/><rect x="196.5" y="95.5" width="4" height="6" fill="#dadada" stroke="#b9b9b9"/><rect x="202.5" y="90.5" width="4" height="11" fill="#dadada" stroke="#b9b9b9"/>
<rect x="228.5" y="90.5" width="13" height="4" fill="#dadada" stroke="#b9b9b9"/><path d="M228.5 95 v5 M241.5 95 v5" stroke="#b9b9b9" stroke-dasharray="1 1"/><rect x="232.5" y="99.5" width="5" height="4" fill="#dadada" stroke="#b9b9b9"/><rect x="229" y="101" width="3" height="1" fill="#9a9a9a"/><rect x="238" y="101" width="3" height="1" fill="#9a9a9a"/><path d="M230 99.5 l-2 2 l2 2 M240 99.5 l2 2 l-2 2" stroke="#9a9a9a" fill="none"/>
<rect x="254" y="92" width="13" height="1" fill="#b9b9b9"/><rect x="254" y="100" width="13" height="1" fill="#b9b9b9"/><rect x="256" y="90" width="1" height="13" fill="#b9b9b9"/><rect x="264" y="90" width="1" height="13" fill="#b9b9b9"/><rect x="257.5" y="93.5" width="6" height="6" fill="#dcdcdc" stroke="#b9b9b9"/><path d="M259.3 89 h3.4 l-1.7 2z M259.3 104 h3.4 l-1.7 -2z M253 95 v3.2 l2 -1.6z M268 95 v3.2 l-2 -1.6z" fill="#a6a6a6"/>
<rect x="280.5" y="90.5" width="4" height="13" fill="#dadada" stroke="#b9b9b9"/><path d="M285 90.5 h7 M285 103.5 h7" stroke="#b9b9b9" stroke-dasharray="1 1"/><rect x="289.5" y="94.5" width="4" height="5" fill="#dadada" stroke="#b9b9b9"/><rect x="291" y="90" width="1" height="4" fill="#9a9a9a"/><rect x="291" y="100" width="1" height="4" fill="#9a9a9a"/><path d="M289.5 92 l2 -2 l2 2 M289.5 102 l2 2 l2 -2" stroke="#9a9a9a" fill="none"/>
<rect x="305.5" y="89.5" width="14" height="14" fill="#d8d8d8" stroke="#cfcfcf"/><rect x="310.5" y="94.5" width="4" height="4" fill="#ececec" stroke="#ababab"/><rect x="306" y="96" width="4" height="1" fill="#9a9a9a"/><rect x="315" y="96" width="4" height="1" fill="#9a9a9a"/><rect x="312" y="90" width="1" height="4" fill="#9a9a9a"/><rect x="312" y="99" width="1" height="4" fill="#9a9a9a"/><path d="M310.5 91.5 l2 -2 l2 2 M310.5 101.5 l2 2 l2 -2 M307.5 94.5 l-2 2 l2 2 M317.5 94.5 l2 2 l-2 2" stroke="#9a9a9a" fill="none"/>
<rect x="339.5" y="94.5" width="3" height="4" fill="#dadada" stroke="#b9b9b9"/><rect x="344.5" y="91.5" width="3" height="10" fill="#dadada" stroke="#b9b9b9"/><rect x="349.5" y="93.5" width="3" height="6" fill="#dadada" stroke="#b9b9b9"/><rect x="343" y="96" width="1" height="1" fill="#b9b9b9"/><rect x="348" y="96" width="1" height="1" fill="#b9b9b9"/>
<rect x="365.5" y="92.5" width="3" height="4" fill="#dadada" stroke="#b9b9b9"/><rect x="370.5" y="89.5" width="3" height="10" fill="#dadada" stroke="#b9b9b9"/><rect x="375.5" y="91.5" width="3" height="6" fill="#dadada" stroke="#b9b9b9"/><rect x="369" y="94" width="1" height="1" fill="#b9b9b9"/><rect x="374" y="94" width="1" height="1" fill="#b9b9b9"/><path d="M369 101.5 h-5 M366 99.5 l-2 2 l2 2" stroke="#a6a6a6" fill="none"/><path d="M375 101.5 h5 M378 99.5 l2 2 l-2 2" stroke="#a6a6a6" fill="none"/>
<rect x="391.5" y="92.5" width="3" height="4" fill="#dadada" stroke="#b9b9b9"/><rect x="396.5" y="89.5" width="3" height="10" fill="#dadada" stroke="#b9b9b9"/><rect x="401.5" y="91.5" width="3" height="6" fill="#dadada" stroke="#b9b9b9"/><rect x="395" y="94" width="1" height="1" fill="#b9b9b9"/><rect x="400" y="94" width="1" height="1" fill="#b9b9b9"/><path d="M390 101.5 h5 M393 99.5 l2 2 l-2 2" stroke="#a6a6a6" fill="none"/><path d="M406 101.5 h-5 M403 99.5 l-2 2 l2 2" stroke="#a6a6a6" fill="none"/>
<rect x="419.5" y="92.5" width="3" height="4" fill="#dadada" stroke="#b9b9b9"/><rect x="426.5" y="91.5" width="2" height="6" fill="#dadada" stroke="#b9b9b9"/><rect x="422.5" y="89.5" width="3" height="10" fill="#dadada" stroke="#b9b9b9"/><path d="M417 101.5 h5 M420 99.5 l2 2 l-2 2" stroke="#a6a6a6" fill="none"/><path d="M432 101.5 h-5 M429 99.5 l-2 2 l2 2" stroke="#a6a6a6" fill="none"/>
<rect x="456" y="93" width="1" height="8" fill="#b9b9b9"/><rect x="454.5" y="90.5" width="4" height="3" fill="#dadada" stroke="#b9b9b9"/><rect x="451.5" y="95.5" width="10" height="3" fill="#dadada" stroke="#b9b9b9"/><rect x="453.5" y="100.5" width="6" height="3" fill="#dadada" stroke="#b9b9b9"/>
<rect x="481" y="93" width="1" height="8" fill="#b9b9b9"/><rect x="479.5" y="90.5" width="4" height="3" fill="#dadada" stroke="#b9b9b9"/><rect x="476.5" y="95.5" width="10" height="3" fill="#dadada" stroke="#b9b9b9"/><rect x="478.5" y="100.5" width="6" height="3" fill="#dadada" stroke="#b9b9b9"/><path d="M488.5 94 v-5 M486.5 91 l2 -2 l2 2" stroke="#a6a6a6" fill="none"/><path d="M488.5 100 v5 M486.5 103 l2 2 l2 -2" stroke="#a6a6a6" fill="none"/>
<rect x="507" y="93" width="1" height="8" fill="#b9b9b9"/><rect x="505.5" y="90.5" width="4" height="3" fill="#dadada" stroke="#b9b9b9"/><rect x="502.5" y="95.5" width="10" height="3" fill="#dadada" stroke="#b9b9b9"/><rect x="504.5" y="100.5" width="6" height="3" fill="#dadada" stroke="#b9b9b9"/><path d="M514.5 89 v5 M512.5 92 l2 2 l2 -2" stroke="#a6a6a6" fill="none"/><path d="M514.5 105 v-5 M512.5 102 l2 -2 l2 2" stroke="#a6a6a6" fill="none"/>
<rect x="531.5" y="92.5" width="4" height="2" fill="#dadada" stroke="#b9b9b9"/><rect x="530.5" y="99.5" width="6" height="2" fill="#dadada" stroke="#b9b9b9"/><rect x="528.5" y="95.5" width="10" height="3" fill="#dadada" stroke="#b9b9b9"/><path d="M540.5 90 v5 M538.5 93 l2 2 l2 -2" stroke="#a6a6a6" fill="none"/><path d="M540.5 104 v-5 M538.5 101 l2 -2 l2 2" stroke="#a6a6a6" fill="none"/>
<rect x="560.5" y="89.5" width="14" height="14" fill="#dedede" stroke="#bdbdbd"/><rect x="561" y="96" width="13" height="1" fill="#c4c4c4"/><rect x="565.5" y="92.5" width="4" height="8" fill="#d4d4d4" stroke="#a8a8a8"/>
<rect x="586.5" y="89.5" width="14" height="14" fill="#dedede" stroke="#bdbdbd"/><rect x="593" y="90" width="1" height="13" fill="#c4c4c4"/><rect x="589.5" y="94.5" width="8" height="4" fill="#d4d4d4" stroke="#a8a8a8"/>
<rect x="620.5" y="90.5" width="6" height="6" fill="#dadada" stroke="#bcbcbc"/><rect x="627.5" y="97.5" width="6" height="6" fill="#dadada" stroke="#bcbcbc"/><rect x="623.5" y="93.5" width="7" height="7" fill="#d6d6d6" stroke="#b4b4b4"/>
<rect x="649.5" y="93.5" width="7" height="7" fill="#dcdcdc" stroke="#bcbcbc"/><rect x="646.5" y="90.5" width="6" height="6" fill="#d6d6d6" stroke="#b4b4b4"/><rect x="653.5" y="97.5" width="6" height="6" fill="#d6d6d6" stroke="#b4b4b4"/>
<path d="M671 94 L674.5 97.3 L678 94 V96.7 L674.5 100 L671 96.7 Z" fill="#6e6e6e"/>
<path d="M706.5 98.5 L710.5 102.5" stroke="#e0a33c" stroke-width="2.6" stroke-linecap="round"/><path d="M706.2 98.2 L710.5 102.5" stroke="#9a6a1e" stroke-width="0.8"/><circle cx="703.3" cy="95.3" r="4.6" fill="#f2f7fc" stroke="#8f9aa8" stroke-width="1.1"/><rect x="701" y="94.8" width="4.6" height="1.2" fill="#c62020"/>
<path d="M780.0 94.0 L783.5 97.3 L787.0 94.0 V96.7 L783.5 100.0 L780.0 96.7 Z" fill="#7a7a7a"/>
<path d="M810.5 98.5 L814.5 102.5" stroke="#e0a33c" stroke-width="2.6" stroke-linecap="round"/><path d="M810.2 98.2 L814.5 102.5" stroke="#9a6a1e" stroke-width="0.8"/><circle cx="807.3" cy="95.3" r="4.6" fill="#f2f7fc" stroke="#8f9aa8" stroke-width="1.1"/><rect x="805" y="94.8" width="4.6" height="1.2" fill="#c62020"/><rect x="806.7" y="93" width="1.2" height="4.6" fill="#c62020"/>
<path d="M827 94 L830.5 97.3 L834 94 V96.7 L830.5 100 L827 96.7 Z" fill="#6e6e6e"/>
<defs>
<linearGradient id="gA" x1="0" y1="0" x2="0" y2="1"><stop offset="0" stop-color="#4d8fe0"/><stop offset="1" stop-color="#1c5fc0"/></linearGradient>
<linearGradient id="gPanel" x1="0" y1="0" x2="1" y2="1"><stop offset="0" stop-color="#d4d9df"/><stop offset="1" stop-color="#aab3be"/></linearGradient>
<linearGradient id="gPic" x1="0" y1="0" x2="0" y2="1"><stop offset="0" stop-color="#e07a1c"/><stop offset="0.7" stop-color="#f4a63a"/><stop offset="0.72" stop-color="#f0852a"/><stop offset="1" stop-color="#f29a35"/></linearGradient>
<linearGradient id="gBlue" x1="0" y1="0" x2="0" y2="1"><stop offset="0" stop-color="#7fb0ea"/><stop offset="1" stop-color="#4a86d8"/></linearGradient>
<linearGradient id="gBlueL" x1="0" y1="0" x2="0" y2="1"><stop offset="0" stop-color="#a9c8f0"/><stop offset="1" stop-color="#6f9fe0"/></linearGradient>
<linearGradient id="gGreen" x1="0" y1="0" x2="0" y2="1"><stop offset="0" stop-color="#b5de2a"/><stop offset="1" stop-color="#79b81c"/></linearGradient>
<linearGradient id="gOr" x1="0" y1="0" x2="1" y2="0"><stop offset="0" stop-color="#f6a04a"/><stop offset="1" stop-color="#d9641a"/></linearGradient>
<linearGradient id="gBox" x1="0" y1="0" x2="0" y2="1"><stop offset="0" stop-color="#ffffff"/><stop offset="1" stop-color="#e6edf5"/></linearGradient>
<linearGradient id="gChk" x1="0" y1="0" x2="1" y2="1"><stop offset="0" stop-color="#c9d3e0"/><stop offset="1" stop-color="#f4f7fa"/></linearGradient>
<linearGradient id="gPtr" x1="0" y1="0" x2="1" y2="0.6"><stop offset="0" stop-color="#c4c9ce"/><stop offset="1" stop-color="#6e767e"/></linearGradient>
<linearGradient id="gBar" x1="0" y1="0" x2="0" y2="1"><stop offset="0" stop-color="#9aa7b8"/><stop offset="1" stop-color="#3d4f66"/></linearGradient>
</defs>
<g transform="translate(0,0)"><path d="M21.4 127.8 L21.4 144.4 L25.4 141 L28.3 147 L30.6 146 L27.8 140 L33.4 139.3 Z" fill="url(#gPtr)" stroke="#4a525a" stroke-width="1" stroke-linejoin="round"/></g>
<text x="26" y="188" font-family="Liberation Serif,serif" font-size="27.5" text-anchor="middle" fill="url(#gA)" stroke="#2a6cc8" stroke-width="0.45">A</text>
<rect x="16.6" y="203.6" width="18.8" height="18.8" rx="2" fill="#f7f9fc" stroke="#5d8fd6" stroke-width="1.2"/><rect x="19" y="206" width="14" height="14" fill="url(#gChk)" stroke="#b4bfcd" stroke-width="0.8"/><path d="M21 213.2 L24.6 217.2 L31.6 209.2" fill="none" stroke="#2a6fd0" stroke-width="2.3" stroke-linejoin="miter"/>
<rect x="17.5" y="235.5" width="17" height="21" fill="url(#gBox)" stroke="#5d8fd6"/><text x="26" y="247.5" font-family="Liberation Serif,serif" font-weight="bold" font-size="12.5" text-anchor="middle" fill="#d2581a">A</text><path d="M21 249.5 h10 M20 251.5 h12 M21 253.5 h10" stroke="#8a97a8" stroke-width="0.9"/>
<rect x="15.5" y="273.5" width="21" height="16" fill="#fff" stroke="#9a9a9a"/><rect x="17" y="275" width="18" height="13" fill="url(#gPic)"/><ellipse cx="30" cy="284.2" rx="3.5" ry="1.2" fill="#ffd766" opacity="0.8"/><rect x="28.5" y="285" width="3" height="3" fill="#ffc84a" opacity="0.7"/><path d="M20.6 288 Q23.2 283 22.4 278.4" stroke="#3a2208" stroke-width="1.1" fill="none"/><path d="M22.4 278.6 q-2.6 -1.8 -4.6 0.6 q2.2 -0.8 4.6 -0.2 q-3 0.6 -4 3.4 q1.8 -2.4 4.2 -2.8 q-0.8 1.6 -0.4 3.6 q0.2 -2.2 1 -3.4 q1.6 0.8 2.2 3 q0 -2.6 -1.6 -3.6 q2.2 -0.2 3.6 1.4 q-1 -2.4 -3.6 -2.2 q1.6 -1.4 3.4 -0.8 q-2.2 -1.6 -4.2 0.4 q-0.2 -1.4 -1.4 -2 q0.8 1 0.8 2.6z" fill="#3a2208"/>
<rect x="16.7" y="305.7" width="18.6" height="18.6" rx="1.8" fill="url(#gPanel)" stroke="#6f7a88" stroke-width="1.4"/><rect x="20" y="309" width="12" height="12" fill="none" stroke="#a4adb8" stroke-width="0.8"/>
<rect x="15.5" y="341.5" width="21" height="16" fill="#fff" stroke="#9aa4b0"/><rect x="15.5" y="341.5" width="21" height="4" fill="url(#gBlue)" stroke="#3f7ad0"/><path d="M22.5 342 v15.5 M29.5 342 v15.5 M16 349.5 h20 M16 353.5 h20" stroke="#a9b3c0" stroke-width="1"/><path d="M22.5 342 v3.5 M29.5 342 v3.5" stroke="#dfeaf8" stroke-width="1"/>
<path d="M18 382 L34.5 398" stroke="#5c6672" stroke-width="1.3"/><rect x="16.5" y="380.5" width="3.4" height="3.4" fill="#fff" stroke="#5c6672" stroke-width="0.9"/><rect x="32.6" y="396.2" width="3.4" height="3.4" fill="#fff" stroke="#5c6672" stroke-width="0.9"/>
<rect x="16.5" y="414.5" width="12.5" height="12.5" fill="url(#gGreen)" stroke="#4f8a10"/><circle cx="29" cy="427" r="6.7" fill="url(#gBlueL)" stroke="#3f78cc" stroke-width="1"/>
<rect x="15.5" y="449.5" width="21" height="18" fill="url(#gBox)" stroke="#5d8fd6"/><rect x="18.2" y="452.5" width="1" height="11" fill="url(#gBar)"/><rect x="20" y="452.5" width="1.2" height="9" fill="url(#gBar)"/><rect x="22.2" y="452.5" width="0.8" height="11" fill="url(#gBar)"/><rect x="23.8" y="452.5" width="1.4" height="9" fill="url(#gBar)"/><rect x="26" y="452.5" width="1" height="9" fill="url(#gBar)"/><rect x="27.6" y="452.5" width="1.4" height="9" fill="url(#gBar)"/><rect x="29.8" y="452.5" width="0.8" height="9" fill="url(#gBar)"/><rect x="31.4" y="452.5" width="1.8" height="11" fill="url(#gBar)"/>
<rect x="15.5" y="483.5" width="21" height="18" fill="url(#gBox)" stroke="#5d8fd6"/><path d="M19.4 486.4 h4.2 M19.4 492.5 h4.2 M19.4 498.6 h4.2 M18.6 487.2 v4.6 M24.4 487.2 v4.6 M18.6 493.2 v4.6 M24.4 493.2 v4.6" stroke="#aab6c6" stroke-width="1.9"/><path d="M28.4 486.4 h4.2 M28.4 492.5 h4.2 M28.4 498.6 h4.2 M27.6 487.2 v4.6 M33.4 487.2 v4.6 M27.6 493.2 v4.6 M33.4 493.2 v4.6" stroke="#1f5fe0" stroke-width="1.9"/>
<rect x="16.5" y="535.5" width="5" height="7" fill="url(#gGreen)" stroke="#4f8a10"/><rect x="23.5" y="524.5" width="5" height="18" fill="url(#gOr)" stroke="#c45a12"/><rect x="30.5" y="529.5" width="5" height="13" fill="url(#gBlueL)" stroke="#3f78cc"/>
<circle cx="26" cy="567" r="11.3" fill="#fff" stroke="#1a1a1a" stroke-width="1"/><path d="M19.77 571.36 A7.6 7.6 0 0 1 29.57 560.29" fill="none" stroke="#2f9bf0" stroke-width="3"/><path d="M32.71 563.43 A7.6 7.6 0 0 1 31.99 571.68" fill="none" stroke="#d9502a" stroke-width="3"/><path d="M26 567 L33 560.4" stroke="#2a2a2a" stroke-width="1.3"/><circle cx="26" cy="567" r="2" fill="#2a2a2a"/>
<rect x="14.5" y="592.5" width="22" height="17" fill="url(#gBox)" stroke="#8797ac"/><path d="M16.5 605 L20 601.6 L22 603.6 L25.6 600 L27.6 602 L32 597 L34.6 600" fill="none" stroke="#d0382a" stroke-width="1.4"/>
<rect x="16.6" y="625.6" width="18.8" height="18.8" rx="1.6" fill="url(#gBox)" stroke="#5d8fd6" stroke-width="1.1"/><text x="26" y="640.5" font-family="Liberation Serif,serif" font-weight="bold" font-size="15.5" text-anchor="middle" fill="#d2501a">Σ</text>
<rect x="17.7" y="659.7" width="16.6" height="18.6" fill="#aab2bd" stroke="#59626e" stroke-width="1.2"/><rect x="20.5" y="661.5" width="11" height="14" fill="#fff" stroke="#7a8491" stroke-width="0.8"/><rect x="22" y="658" width="8" height="3.4" rx="1.2" fill="#5b93e0" stroke="#3a72c4" stroke-width="0.7"/><path d="M22.5 665.5 h7 M22.5 667.5 h7 M22.5 669.5 h7 M22.5 671.5 h7 M22.5 673.5 h7" stroke="#9aa3ae" stroke-width="0.8"/>
<rect x="15.5" y="699.5" width="20" height="20" fill="url(#gBlue)" stroke="#4a82d6"/><rect x="18" y="704" width="8" height="1" fill="#fff"/><rect x="27" y="704" width="1.3" height="1" fill="#fff"/><rect x="29.2" y="704" width="1.3" height="1" fill="#fff"/><rect x="31.4" y="704" width="1.8" height="1" fill="#fff"/><rect x="18" y="706" width="8" height="1" fill="#fff"/><rect x="27" y="706" width="1.3" height="1" fill="#fff"/><rect x="29.2" y="706" width="1.3" height="1" fill="#fff"/><rect x="31.4" y="706" width="1.8" height="1" fill="#fff"/><rect x="18" y="708" width="8" height="1" fill="#fff"/><rect x="27" y="708" width="1.3" height="1" fill="#fff"/><rect x="29.2" y="708" width="1.3" height="1" fill="#fff"/><rect x="31.4" y="708" width="1.8" height="1" fill="#fff"/><rect x="18" y="710" width="8" height="1" fill="#fff"/><rect x="27" y="710" width="1.3" height="1" fill="#fff"/><rect x="29.2" y="710" width="1.3" height="1" fill="#fff"/><rect x="31.4" y="710" width="1.8" height="1" fill="#fff"/><rect x="18" y="712" width="8" height="1" fill="#fff"/><rect x="27" y="712" width="1.3" height="1" fill="#fff"/><rect x="29.2" y="712" width="1.3" height="1" fill="#fff"/><rect x="31.4" y="712" width="1.8" height="1" fill="#fff"/><rect x="18" y="714" width="8" height="1" fill="#fff"/><rect x="27" y="714" width="1.3" height="1" fill="#fff"/><rect x="29.2" y="714" width="1.3" height="1" fill="#fff"/><rect x="31.4" y="714" width="1.8" height="1" fill="#fff"/>
<rect x="16.5" y="733.5" width="14" height="16" fill="#fff" stroke="#6f9ad8"/><path d="M19 737.5 h9 M19 739.5 h9 M19 741.5 h5 M19 743.5 h4 M19 745.5 h4" stroke="#b3bcc8" stroke-width="0.9"/><rect x="22.6" y="741.6" width="12.8" height="12.8" rx="1.6" fill="url(#gBlueL)" stroke="#3f78cc" stroke-width="1"/><text x="29" y="752.3" font-family="Liberation Serif,serif" font-weight="bold" font-size="11.5" text-anchor="middle" fill="#0c2f78">i</text>
<path d="M18.5 767 v7.5 h15 v-7.5" fill="#fff" stroke="#5d8fd6"/><path d="M18.5 789 v-7.5 h15 v7.5" fill="#fff" stroke="#5d8fd6"/><path d="M21 768.5 h10 M21 770.5 h10 M21 772.5 h10 M21 783.5 h10 M21 785.5 h10 M21 787.5 h10" stroke="#a6afbb" stroke-width="0.9"/><path d="M15 776 l2.6 2 l-2.6 2z M37 776 l-2.6 2 l2.6 2z" fill="#57a81c"/>
<path d="M23 809 L26.3 812.5 L23 816 H25.7 L29 812.5 L25.7 809 Z" fill="#6e6e6e"/>
<path d="M168.5 132 V127.5 H172.5 V132" stroke="#6e6e6e" fill="none" stroke-width="1"/><rect x="170" y="128" width="2" height="4" fill="#6e6e6e"/><rect x="167" y="132" width="7" height="1" fill="#6e6e6e"/><rect x="170" y="133" width="1" height="2.3" fill="#6e6e6e"/>
<path d="M185.5 127.3 L193.5 133.8 M193.5 127.3 L185.5 133.8" stroke="#6e6e6e" stroke-width="1.35" fill="none"/>
<path d="M123 156.5 L126.5 153 L130 156.5 Z" fill="#666"/>
<path d="M123 809 L126.5 812.5 L130 809 Z" fill="#666"/>
<text x="71" y="186" font-family="Liberation Serif,serif" font-size="27.5" text-anchor="middle" fill="url(#gA)" stroke="#2a6cc8" stroke-width="0.45">A</text>
<rect x="61.6" y="199.6" width="18.8" height="18.8" rx="2" fill="#f7f9fc" stroke="#5d8fd6" stroke-width="1.2"/><rect x="64" y="202" width="14" height="14" fill="url(#gChk)" stroke="#b4bfcd" stroke-width="0.8"/><path d="M66 209.2 L69.6 213.2 L76.6 205.2" fill="none" stroke="#2a6fd0" stroke-width="2.3" stroke-linejoin="miter"/>
<rect x="62.5" y="229.5" width="17" height="21" fill="url(#gBox)" stroke="#5d8fd6"/><text x="71" y="241.5" font-family="Liberation Serif,serif" font-weight="bold" font-size="12.5" text-anchor="middle" fill="#d2581a">A</text><path d="M66 243.5 h10 M65 245.5 h12 M66 247.5 h10" stroke="#8a97a8" stroke-width="0.9"/>
<rect x="60.5" y="265.5" width="21" height="16" fill="#fff" stroke="#9a9a9a"/><rect x="62" y="267" width="18" height="13" fill="url(#gPic)"/><ellipse cx="75" cy="276.2" rx="3.5" ry="1.2" fill="#ffd766" opacity="0.8"/><rect x="73.5" y="277" width="3" height="3" fill="#ffc84a" opacity="0.7"/><path d="M65.6 280 Q68.2 275 67.4 270.4" stroke="#3a2208" stroke-width="1.1" fill="none"/><path d="M67.4 270.6 q-2.6 -1.8 -4.6 0.6 q2.2 -0.8 4.6 -0.2 q-3 0.6 -4 3.4 q1.8 -2.4 4.2 -2.8 q-0.8 1.6 -0.4 3.6 q0.2 -2.2 1 -3.4 q1.6 0.8 2.2 3 q0 -2.6 -1.6 -3.6 q2.2 -0.2 3.6 1.4 q-1 -2.4 -3.6 -2.2 q1.6 -1.4 3.4 -0.8 q-2.2 -1.6 -4.2 0.4 q-0.2 -1.4 -1.4 -2 q0.8 1 0.8 2.6z" fill="#3a2208"/>
<rect x="61.7" y="295.7" width="18.6" height="18.6" rx="1.8" fill="url(#gPanel)" stroke="#6f7a88" stroke-width="1.4"/><rect x="65" y="299" width="12" height="12" fill="none" stroke="#a4adb8" stroke-width="0.8"/>
<rect x="60.5" y="329.5" width="21" height="16" fill="#fff" stroke="#9aa4b0"/><rect x="60.5" y="329.5" width="21" height="4" fill="url(#gBlue)" stroke="#3f7ad0"/><path d="M67.5 330 v15.5 M74.5 330 v15.5 M61 337.5 h20 M61 341.5 h20" stroke="#a9b3c0" stroke-width="1"/><path d="M67.5 330 v3.5 M74.5 330 v3.5" stroke="#dfeaf8" stroke-width="1"/>
<path d="M63 361 L79.5 377" stroke="#5c6672" stroke-width="1.3"/><rect x="61.5" y="359.5" width="3.4" height="3.4" fill="#fff" stroke="#5c6672" stroke-width="0.9"/><rect x="77.6" y="375.2" width="3.4" height="3.4" fill="#fff" stroke="#5c6672" stroke-width="0.9"/>
<rect x="61.5" y="391.5" width="12.5" height="12.5" fill="url(#gGreen)" stroke="#4f8a10"/><circle cx="74" cy="404" r="6.7" fill="url(#gBlueL)" stroke="#3f78cc" stroke-width="1"/>
<rect x="60.5" y="424.5" width="21" height="18" fill="url(#gBox)" stroke="#5d8fd6"/><rect x="63.2" y="427.5" width="1" height="11" fill="url(#gBar)"/><rect x="65" y="427.5" width="1.2" height="9" fill="url(#gBar)"/><rect x="67.2" y="427.5" width="0.8" height="11" fill="url(#gBar)"/><rect x="68.8" y="427.5" width="1.4" height="9" fill="url(#gBar)"/><rect x="71" y="427.5" width="1" height="9" fill="url(#gBar)"/><rect x="72.6" y="427.5" width="1.4" height="9" fill="url(#gBar)"/><rect x="74.8" y="427.5" width="0.8" height="9" fill="url(#gBar)"/><rect x="76.4" y="427.5" width="1.8" height="11" fill="url(#gBar)"/>
<rect x="60.5" y="456.5" width="21" height="18" fill="url(#gBox)" stroke="#5d8fd6"/><path d="M64.4 459.4 h4.2 M64.4 465.5 h4.2 M64.4 471.6 h4.2 M63.6 460.2 v4.6 M69.4 460.2 v4.6 M63.6 466.2 v4.6 M69.4 466.2 v4.6" stroke="#aab6c6" stroke-width="1.9"/><path d="M73.4 459.4 h4.2 M73.4 465.5 h4.2 M73.4 471.6 h4.2 M72.6 460.2 v4.6 M78.4 460.2 v4.6 M72.6 466.2 v4.6 M78.4 466.2 v4.6" stroke="#1f5fe0" stroke-width="1.9"/>
<rect x="61.5" y="499.5" width="5" height="7" fill="url(#gGreen)" stroke="#4f8a10"/><rect x="68.5" y="488.5" width="5" height="18" fill="url(#gOr)" stroke="#c45a12"/><rect x="75.5" y="493.5" width="5" height="13" fill="url(#gBlueL)" stroke="#3f78cc"/>
<circle cx="71" cy="529" r="11.3" fill="#fff" stroke="#1a1a1a" stroke-width="1"/><path d="M64.77 533.36 A7.6 7.6 0 0 1 74.57 522.29" fill="none" stroke="#2f9bf0" stroke-width="3"/><path d="M77.71 525.43 A7.6 7.6 0 0 1 76.99 533.68" fill="none" stroke="#d9502a" stroke-width="3"/><path d="M71 529 L78 522.4" stroke="#2a2a2a" stroke-width="1.3"/><circle cx="71" cy="529" r="2" fill="#2a2a2a"/>
<rect x="59.5" y="552.5" width="22" height="17" fill="url(#gBox)" stroke="#8797ac"/><path d="M61.5 565 L65 561.6 L67 563.6 L70.6 560 L72.6 562 L77 557 L79.6 560" fill="none" stroke="#d0382a" stroke-width="1.4"/>
<rect x="61.6" y="583.6" width="18.8" height="18.8" rx="1.6" fill="url(#gBox)" stroke="#5d8fd6" stroke-width="1.1"/><text x="71" y="598.5" font-family="Liberation Serif,serif" font-weight="bold" font-size="15.5" text-anchor="middle" fill="#d2501a">Σ</text>
<rect x="62.7" y="615.7" width="16.6" height="18.6" fill="#aab2bd" stroke="#59626e" stroke-width="1.2"/><rect x="65.5" y="617.5" width="11" height="14" fill="#fff" stroke="#7a8491" stroke-width="0.8"/><rect x="67" y="614" width="8" height="3.4" rx="1.2" fill="#5b93e0" stroke="#3a72c4" stroke-width="0.7"/><path d="M67.5 621.5 h7 M67.5 623.5 h7 M67.5 625.5 h7 M67.5 627.5 h7 M67.5 629.5 h7" stroke="#9aa3ae" stroke-width="0.8"/>
<rect x="60.5" y="646.5" width="20" height="20" fill="url(#gBlue)" stroke="#4a82d6"/><rect x="63" y="651" width="8" height="1" fill="#fff"/><rect x="72" y="651" width="1.3" height="1" fill="#fff"/><rect x="74.2" y="651" width="1.3" height="1" fill="#fff"/><rect x="76.4" y="651" width="1.8" height="1" fill="#fff"/><rect x="63" y="653" width="8" height="1" fill="#fff"/><rect x="72" y="653" width="1.3" height="1" fill="#fff"/><rect x="74.2" y="653" width="1.3" height="1" fill="#fff"/><rect x="76.4" y="653" width="1.8" height="1" fill="#fff"/><rect x="63" y="655" width="8" height="1" fill="#fff"/><rect x="72" y="655" width="1.3" height="1" fill="#fff"/><rect x="74.2" y="655" width="1.3" height="1" fill="#fff"/><rect x="76.4" y="655" width="1.8" height="1" fill="#fff"/><rect x="63" y="657" width="8" height="1" fill="#fff"/><rect x="72" y="657" width="1.3" height="1" fill="#fff"/><rect x="74.2" y="657" width="1.3" height="1" fill="#fff"/><rect x="76.4" y="657" width="1.8" height="1" fill="#fff"/><rect x="63" y="659" width="8" height="1" fill="#fff"/><rect x="72" y="659" width="1.3" height="1" fill="#fff"/><rect x="74.2" y="659" width="1.3" height="1" fill="#fff"/><rect x="76.4" y="659" width="1.8" height="1" fill="#fff"/><rect x="63" y="661" width="8" height="1" fill="#fff"/><rect x="72" y="661" width="1.3" height="1" fill="#fff"/><rect x="74.2" y="661" width="1.3" height="1" fill="#fff"/><rect x="76.4" y="661" width="1.8" height="1" fill="#fff"/>
<rect x="61.5" y="678.5" width="14" height="16" fill="#fff" stroke="#6f9ad8"/><path d="M64 682.5 h9 M64 684.5 h9 M64 686.5 h5 M64 688.5 h4 M64 690.5 h4" stroke="#b3bcc8" stroke-width="0.9"/><rect x="67.6" y="686.6" width="12.8" height="12.8" rx="1.6" fill="url(#gBlueL)" stroke="#3f78cc" stroke-width="1"/><text x="74" y="697.3" font-family="Liberation Serif,serif" font-weight="bold" font-size="11.5" text-anchor="middle" fill="#0c2f78">i</text>
<path d="M63.5 710 v7.5 h15 v-7.5" fill="#fff" stroke="#5d8fd6"/><path d="M63.5 732 v-7.5 h15 v7.5" fill="#fff" stroke="#5d8fd6"/><path d="M66 711.5 h10 M66 713.5 h10 M66 715.5 h10 M66 726.5 h10 M66 728.5 h10 M66 730.5 h10" stroke="#a6afbb" stroke-width="0.9"/><path d="M60 719 l2.6 2 l-2.6 2z M82 719 l-2.6 2 l2.6 2z" fill="#57a81c"/>
<path d="M70.5 744 v18" stroke="#5c6672" stroke-width="1"/><rect x="60.5" y="747.5" width="21" height="4.4" rx="0.8" fill="url(#gBlue)" stroke="#3f78cc"/><rect x="60.5" y="754.1" width="21" height="4.4" rx="0.8" fill="url(#gBlue)" stroke="#3f78cc"/><rect x="69.2" y="742.4" width="2.6" height="2.6" fill="#fff" stroke="#5c6672" stroke-width="0.8"/><rect x="69.2" y="761" width="2.6" height="2.6" fill="#fff" stroke="#5c6672" stroke-width="0.8"/>
<rect x="63.5" y="776.5" width="15" height="17" fill="none" stroke="#5c6672" stroke-width="1"/><rect x="60.5" y="779.2" width="21" height="4.6" rx="0.8" fill="url(#gBlue)" stroke="#3f78cc"/><rect x="60.5" y="786" width="21" height="4.6" rx="0.8" fill="url(#gBlue)" stroke="#3f78cc"/><rect x="62.2" y="775.2" width="2.6" height="2.6" fill="#fff" stroke="#5c6672" stroke-width="0.8"/><rect x="77.2" y="775.2" width="2.6" height="2.6" fill="#fff" stroke="#5c6672" stroke-width="0.8"/><rect x="62.2" y="792.2" width="2.6" height="2.6" fill="#fff" stroke="#5c6672" stroke-width="0.8"/><rect x="77.2" y="792.2" width="2.6" height="2.6" fill="#fff" stroke="#5c6672" stroke-width="0.8"/>
<path d="M233.2 128 V135.2 H226 Z" fill="#707070"/>
<rect x="262" y="130" width="1" height="2" fill="#505050"/><rect x="274" y="130" width="1" height="2" fill="#505050"/><rect x="286" y="130" width="1" height="2" fill="#505050"/><rect x="298" y="128" width="1" height="6" fill="#505050"/><rect x="310" y="130" width="1" height="2" fill="#505050"/><rect x="322" y="130" width="1" height="2" fill="#505050"/><rect x="334" y="130" width="1" height="2" fill="#505050"/><rect x="358" y="130" width="1" height="2" fill="#505050"/><rect x="370" y="130" width="1" height="2" fill="#505050"/><rect x="382" y="130" width="1" height="2" fill="#505050"/><rect x="394" y="128" width="1" height="6" fill="#505050"/><rect x="406" y="130" width="1" height="2" fill="#505050"/><rect x="418" y="130" width="1" height="2" fill="#505050"/><rect x="430" y="130" width="1" height="2" fill="#505050"/><rect x="454" y="130" width="1" height="2" fill="#505050"/><rect x="466" y="130" width="1" height="2" fill="#505050"/><rect x="478" y="130" width="1" height="2" fill="#505050"/><rect x="490" y="128" width="1" height="6" fill="#505050"/><rect x="502" y="130" width="1" height="2" fill="#505050"/><rect x="514" y="130" width="1" height="2" fill="#505050"/><rect x="526" y="130" width="1" height="2" fill="#505050"/><rect x="550" y="130" width="1" height="2" fill="#505050"/><rect x="562" y="130" width="1" height="2" fill="#505050"/><rect x="574" y="130" width="1" height="2" fill="#505050"/><rect x="586" y="128" width="1" height="6" fill="#505050"/><rect x="598" y="130" width="1" height="2" fill="#505050"/><rect x="610" y="130" width="1" height="2" fill="#505050"/><rect x="622" y="130" width="1" height="2" fill="#505050"/><rect x="646" y="130" width="1" height="2" fill="#505050"/><rect x="658" y="130" width="1" height="2" fill="#505050"/><rect x="670" y="130" width="1" height="2" fill="#505050"/><rect x="682" y="128" width="1" height="6" fill="#505050"/><rect x="694" y="130" width="1" height="2" fill="#505050"/><rect x="706" y="130" width="1" height="2" fill="#505050"/><rect x="718" y="130" width="1" height="2" fill="#505050"/><rect x="742" y="130" width="1" height="2" fill="#505050"/><rect x="754" y="130" width="1" height="2" fill="#505050"/><rect x="766" y="130" width="1" height="2" fill="#505050"/><rect x="778" y="128" width="1" height="6" fill="#505050"/><rect x="790" y="130" width="1" height="2" fill="#505050"/><rect x="802" y="130" width="1" height="2" fill="#505050"/><rect x="814" y="130" width="1" height="2" fill="#505050"/><rect x="838" y="130" width="1" height="2" fill="#505050"/><rect x="850" y="130" width="1" height="2" fill="#505050"/><rect x="862" y="130" width="1" height="2" fill="#505050"/><rect x="874" y="128" width="1" height="6" fill="#505050"/><rect x="886" y="130" width="1" height="2" fill="#505050"/><rect x="898" y="130" width="1" height="2" fill="#505050"/><rect x="910" y="130" width="1" height="2" fill="#505050"/><rect x="934" y="130" width="1" height="2" fill="#505050"/><rect x="946" y="130" width="1" height="2" fill="#505050"/>
<g font-family="Liberation Sans,sans-serif" font-size="9.5" fill="#6b6b6b" text-anchor="middle"><text x="250.5" y="134">1</text><text x="442.5" y="134">1</text><text x="538.5" y="134">2</text><text x="634.5" y="134">3</text><text x="730.5" y="134">4</text><text x="826.5" y="134">5</text><text x="922.5" y="134">6</text></g>
<g font-family="Liberation Sans,sans-serif" font-size="9.5" fill="#6b6b6b" text-anchor="middle"><rect x="228" y="162" width="2" height="1" fill="#505050"/><rect x="228" y="174" width="2" height="1" fill="#505050"/><rect x="228" y="186" width="2" height="1" fill="#505050"/><rect x="226" y="198" width="6" height="1" fill="#505050"/><rect x="228" y="210" width="2" height="1" fill="#505050"/><rect x="228" y="222" width="2" height="1" fill="#505050"/><rect x="228" y="234" width="2" height="1" fill="#505050"/><text x="229.5" y="247" font-size="7.5" fill="#555">1</text><rect x="228" y="279" width="2" height="1" fill="#505050"/><rect x="228" y="291" width="2" height="1" fill="#505050"/><rect x="228" y="303" width="2" height="1" fill="#505050"/><rect x="226" y="315" width="6" height="1" fill="#505050"/><rect x="228" y="327" width="2" height="1" fill="#505050"/><rect x="228" y="339" width="2" height="1" fill="#505050"/><rect x="228" y="351" width="2" height="1" fill="#505050"/><text x="229.5" y="364" font-size="7.5" fill="#555">1</text><path d="M225 255.5 h8 M225 257.5 h8 M225 259.5 h8" stroke="#505050" stroke-width="1"/><rect x="228" y="405" width="2" height="1" fill="#505050"/><rect x="228" y="417" width="2" height="1" fill="#505050"/><path d="M225 381.5 h8 M225 383.5 h8 M225 385.5 h8" stroke="#505050" stroke-width="1"/><rect x="228" y="461" width="2" height="1" fill="#505050"/><rect x="228" y="473" width="2" height="1" fill="#505050"/><path d="M225 437.5 h8 M225 439.5 h8 M225 441.5 h8" stroke="#505050" stroke-width="1"/><rect x="228" y="517" width="2" height="1" fill="#505050"/><rect x="228" y="529" width="2" height="1" fill="#505050"/><path d="M225 493.5 h8 M225 495.5 h8 M225 497.5 h8" stroke="#505050" stroke-width="1"/><rect x="228" y="573" width="2" height="1" fill="#505050"/><path d="M225 549.5 h8 M225 551.5 h8 M225 553.5 h8" stroke="#505050" stroke-width="1"/><rect x="228" y="617" width="2" height="1" fill="#505050"/><path d="M225 593.5 h8 M225 595.5 h8 M225 597.5 h8" stroke="#505050" stroke-width="1"/><rect x="228" y="661" width="2" height="1" fill="#505050"/><rect x="228" y="673" width="2" height="1" fill="#505050"/><path d="M225 637.5 h8 M225 639.5 h8 M225 641.5 h8" stroke="#505050" stroke-width="1"/><rect x="228" y="689" width="2" height="1" fill="#505050"/><rect x="228" y="701" width="2" height="1" fill="#505050"/><rect x="228" y="713" width="2" height="1" fill="#505050"/><rect x="226" y="725" width="6" height="1" fill="#505050"/><rect x="228" y="737" width="2" height="1" fill="#505050"/><rect x="228" y="749" width="2" height="1" fill="#505050"/><rect x="228" y="761" width="2" height="1" fill="#505050"/><text x="229.5" y="774" font-size="7.5" fill="#555">1</text></g>
<path d="M254.8 255 h7.4 l-3.7 6.4z" fill="#707070"/>
<rect x="270.6" y="251.6" width="9.8" height="12.8" rx="1.2" fill="#fff" stroke="#4f86d2" stroke-width="1.2"/><path d="M272.5 253 v11 M278.5 253 v11" stroke="#c9dbf3" stroke-width="1"/><path d="M273 253 v-1.6 q0 -1.4 1.4 -1.4 h2.2 q1.4 0 1.4 1.4 v1.6z" fill="#2f6fcf"/><rect x="272" y="254" width="7" height="4" fill="#e0651a"/><rect x="273" y="255" width="5" height="1.6" fill="#f7a04a"/>
<path d="M254.8 380 h7.4 l-3.7 6.4z" fill="#707070"/>
<rect x="268.5" y="376.5" width="12" height="3" rx="0.8" fill="#f9a94a" stroke="#d2691e" stroke-width="1"/><rect x="271" y="381" width="12" height="1" fill="#3d4b5c"/><rect x="271" y="383" width="12" height="1" fill="#3d4b5c"/><rect x="268.5" y="385.5" width="12" height="3" rx="0.8" fill="#b9c3ce" stroke="#5c6978" stroke-width="1"/>
<path d="M254.8 436 h7.4 l-3.7 6.4z" fill="#707070"/>
<rect x="268.5" y="432.5" width="12" height="3" rx="0.8" fill="#f9a94a" stroke="#d2691e" stroke-width="1"/><rect x="271" y="437" width="12" height="1" fill="#3d4b5c"/><rect x="271" y="439" width="12" height="1" fill="#3d4b5c"/><rect x="268.5" y="441.5" width="12" height="3" rx="0.8" fill="#b9c3ce" stroke="#5c6978" stroke-width="1"/>
<path d="M254.8 492 h7.4 l-3.7 6.4z" fill="#707070"/>
<rect x="268.5" y="488.5" width="12" height="3" rx="0.8" fill="#f9a94a" stroke="#d2691e" stroke-width="1"/><rect x="271" y="493" width="12" height="1" fill="#3d4b5c"/><rect x="271" y="495" width="12" height="1" fill="#3d4b5c"/><rect x="268.5" y="497.5" width="12" height="3" rx="0.8" fill="#b9c3ce" stroke="#5c6978" stroke-width="1"/>
<path d="M254.8 548 h7.4 l-3.7 6.4z" fill="#707070"/>
<rect x="268.5" y="544.5" width="12" height="3" rx="0.8" fill="#f9a94a" stroke="#d2691e" stroke-width="1"/><rect x="271" y="549" width="12" height="1" fill="#3d4b5c"/><rect x="271" y="551" width="12" height="1" fill="#3d4b5c"/><rect x="268.5" y="553.5" width="12" height="3" rx="0.8" fill="#b9c3ce" stroke="#5c6978" stroke-width="1"/>
<path d="M254.8 592 h7.4 l-3.7 6.4z" fill="#707070"/>
<rect x="269.6" y="587.6" width="11.8" height="13.8" rx="1" fill="#fff" stroke="#5a8fd6" stroke-width="1.2"/><path d="M271.5 588.5 v12 M279.5 588.5 v12 M270.5 589.5 h10 M270.5 599.5 h10" stroke="#c9dbf3" stroke-width="1"/><rect x="271.5" y="590.5" width="8" height="8" fill="#fff" stroke="#5f6670" stroke-width="1"/><rect x="273" y="592" width="5" height="1" fill="#6a717b"/><rect x="273" y="594" width="5" height="1" fill="#6a717b"/><rect x="273" y="596" width="3" height="1" fill="#6a717b"/>
<path d="M254.8 636 h7.4 l-3.7 6.4z" fill="#707070"/>
<rect x="270.6" y="632.6" width="9.8" height="12.8" rx="1.2" fill="#fff" stroke="#4f86d2" stroke-width="1.2"/><path d="M272.5 634 v11 M278.5 634 v11" stroke="#c9dbf3" stroke-width="1"/><path d="M273 634 v-1.6 q0 -1.4 1.4 -1.4 h2.2 q1.4 0 1.4 1.4 v1.6z" fill="#2f6fcf"/><rect x="272" y="639" width="7" height="4" fill="#4f9a12"/><rect x="273" y="640" width="5" height="1.6" fill="#86c832"/>
<path d="M255.2 151.2 L258.6 153.5 L255.2 155.8" stroke="#fff" stroke-width="1.5" fill="none"/>
<path d="M423.8 398.2 v5.4 a3.4 1.9 0 0 0 6.8 0 v-5.4" fill="#f2b52c" stroke="#7a4e06" stroke-width="0.9"/><ellipse cx="427.2" cy="398.2" rx="3.4" ry="1.7" fill="#fbe596" stroke="#7a4e06" stroke-width="0.9"/>
<path d="M475.4 454.3 v5.4 a3.4 1.9 0 0 0 6.8 0 v-5.4" fill="#f2b52c" stroke="#7a4e06" stroke-width="0.9"/><ellipse cx="478.79999999999995" cy="454.3" rx="3.4" ry="1.7" fill="#fbe596" stroke="#7a4e06" stroke-width="0.9"/>
<path d="M558.5 510.5 v5.4 a3.4 1.9 0 0 0 6.8 0 v-5.4" fill="#f2b52c" stroke="#7a4e06" stroke-width="0.9"/><ellipse cx="561.9" cy="510.5" rx="3.4" ry="1.7" fill="#fbe596" stroke="#7a4e06" stroke-width="0.9"/>
<path d="M936 156 L939.5 152.7 L943 156 V153.3 L939.5 150 L936 153.3 Z" fill="#707070"/>
<path d="M936 762 L939.5 765.3 L943 762 V764.7 L939.5 768 L936 764.7 Z" fill="#707070"/>
<path d="M254 778 L250.7 781.5 L254 785 H251.3 L248 781.5 L251.3 778 Z" fill="#707070"/>
<path d="M919.5 778 L922.8 781.5 L919.5 785 H922.2 L925.5 781.5 L922.2 778 Z" fill="#707070"/>
<path d="M231.6 797.2 V810.4 H218.8 Z" fill="#f8bd60" stroke="#d98a1e" stroke-width="1.1" stroke-linejoin="round"/><path d="M229 803.8 V807.8 H225 Z" fill="#0072c6"/><path d="M220.6 800.8 L226.4 809.4" stroke="#f0a24a" stroke-width="2.5"/><path d="M219.6 799.3 L221 801.4" stroke="#f088a4" stroke-width="2.7"/><path d="M225.2 809.8 l2.2 -1.4 l0.9 3.2z" fill="#1a1a1a"/>
<path d="M303.5 796.5 h7.5 l2.5 2.5 v10.5 h-10z" fill="#f2f4f8" stroke="#c5ccd6" stroke-width="0.8"/><path d="M310.2 806.8 L306.8 810.4" stroke="#c8742a" stroke-width="2.1" stroke-linecap="round"/><circle cx="312.2" cy="804.5" r="2.9" fill="#d8ecfc" stroke="#6a7480" stroke-width="1.2"/>
<path d="M374.5 796.5 h7.5 l2.5 2.5 v10.5 h-10z" fill="#f2f4f8" stroke="#c5ccd6" stroke-width="0.8"/><circle cx="376.2" cy="800.6" r="3.2" fill="#3e9a3e"/><path d="M374 800 q2.2 -2.4 4.4 0" stroke="#9fd8f4" fill="none" stroke-width="1.2"/><path d="M381.2 806.8 L377.8 810.4" stroke="#c8742a" stroke-width="2.1" stroke-linecap="round"/><circle cx="383.2" cy="804.5" r="2.9" fill="#d8ecfc" stroke="#6a7480" stroke-width="1.2"/>
<rect x="473.5" y="796.5" width="10" height="12" fill="#f2f4f8" stroke="#c5ccd6" stroke-width="0.8"/><text x="479" y="806" font-size="9" font-family="Liberation Sans,sans-serif" font-weight="bold" text-anchor="middle" fill="#2a3a5a">{}</text><path d="M472.2 799.6 L477.4 808.6" stroke="#f0a24a" stroke-width="2.5"/><path d="M471.2 797.8 L472.6 800.2" stroke="#f088a4" stroke-width="2.8"/><path d="M476.2 808.8 l2.2 -1.3 l0.8 3.2z" fill="#1a1a1a"/>
<path d="M1202.5 132 V127.5 H1206.5 V132" stroke="#6e6e6e" fill="none" stroke-width="1"/><rect x="1204" y="128" width="2" height="4" fill="#6e6e6e"/><rect x="1201" y="132" width="7" height="1" fill="#6e6e6e"/><rect x="1204" y="133" width="1" height="2.3" fill="#6e6e6e"/>
<path d="M1219.8 127.3 L1227.8 133.8 M1227.8 127.3 L1219.8 133.8" stroke="#6e6e6e" stroke-width="1.35" fill="none"/>
<path d="M1227 157 L1230.5 160.3 L1234 157 V159.7 L1230.5 163 L1227 159.7 Z" fill="#7a7a7a"/>
<rect x="960.6" y="177.6" width="5.8" height="5.8" rx="1.4" fill="#f6eee2" stroke="#1a8cff" stroke-width="1.2"/><rect x="962" y="180" width="3" height="1" fill="#111"/><rect x="963" y="179" width="1" height="3" fill="#111"/><rect x="968" y="179" width="4" height="1.2" fill="#111"/><rect x="968" y="181" width="4" height="1" fill="#707070"/><rect x="973" y="181" width="3" height="1" fill="#707070"/><rect x="968" y="183" width="4" height="1" fill="#707070"/><rect x="973" y="183" width="3" height="1" fill="#707070"/><rect x="968" y="185" width="4" height="1" fill="#707070"/><rect x="973" y="185" width="3" height="1" fill="#707070"/><rect x="960.6" y="186.6" width="5.8" height="5.8" rx="1.4" fill="#f6eee2" stroke="#1a8cff" stroke-width="1.2"/><rect x="962" y="189" width="3" height="1" fill="#111"/><rect x="963" y="188" width="1" height="3" fill="#111"/><rect x="968" y="188" width="4" height="1.2" fill="#111"/><rect x="968" y="190" width="4" height="1" fill="#707070"/><rect x="973" y="190" width="3" height="1" fill="#707070"/><rect x="968" y="192" width="4" height="1" fill="#707070"/><rect x="973" y="192" width="3" height="1" fill="#707070"/>
<text x="986.7" y="184" font-family="Liberation Sans,sans-serif" font-weight="bold" font-size="10" fill="#1a6fe8">A</text><text x="987" y="192" font-family="Liberation Sans,sans-serif" font-weight="bold" font-size="10" fill="#a00000">Z</text><rect x="998" y="177" width="1.1" height="10" fill="#000"/><path d="M995.6 186.2 H1001.4 L998.5 192 Z" fill="#000"/>
<path d="M1225 211.6 h7 l-3.5 -3.8z" fill="#555"/>
<path d="M977.6 317.5 v8 l4 -4z" fill="#6a6a6a"/>
<path d="M977.6 373.5 v8 l4 -4z" fill="#6a6a6a"/>
<path d="M977.6 390.5 v8 l4 -4z" fill="#6a6a6a"/>
<path d="M977.6 408.5 v8 l4 -4z" fill="#6a6a6a"/>
<path d="M1225 451.6 h7 l-3.5 -3.8z" fill="#555"/>
<path d="M977.6 463.5 v8 l4 -4z" fill="#6a6a6a"/>
<path d="M1225 505.6 h7 l-3.5 -3.8z" fill="#555"/>
<path d="M1225 540.6 h7 l-3.5 -3.8z" fill="#555"/>
<path d="M1225 575.6 h7 l-3.5 -3.8z" fill="#555"/>
<path d="M977.6 604.5 v8 l4 -4z" fill="#6a6a6a"/>
<g fill="#666"><rect x="1087" y="758" width="2" height="2"/><rect x="1091" y="758" width="2" height="2"/><rect x="1095" y="758" width="2" height="2"/><rect x="1099" y="758" width="2" height="2"/><rect x="1103" y="758" width="2" height="2"/></g>
</svg>
</div>
</body></html>
